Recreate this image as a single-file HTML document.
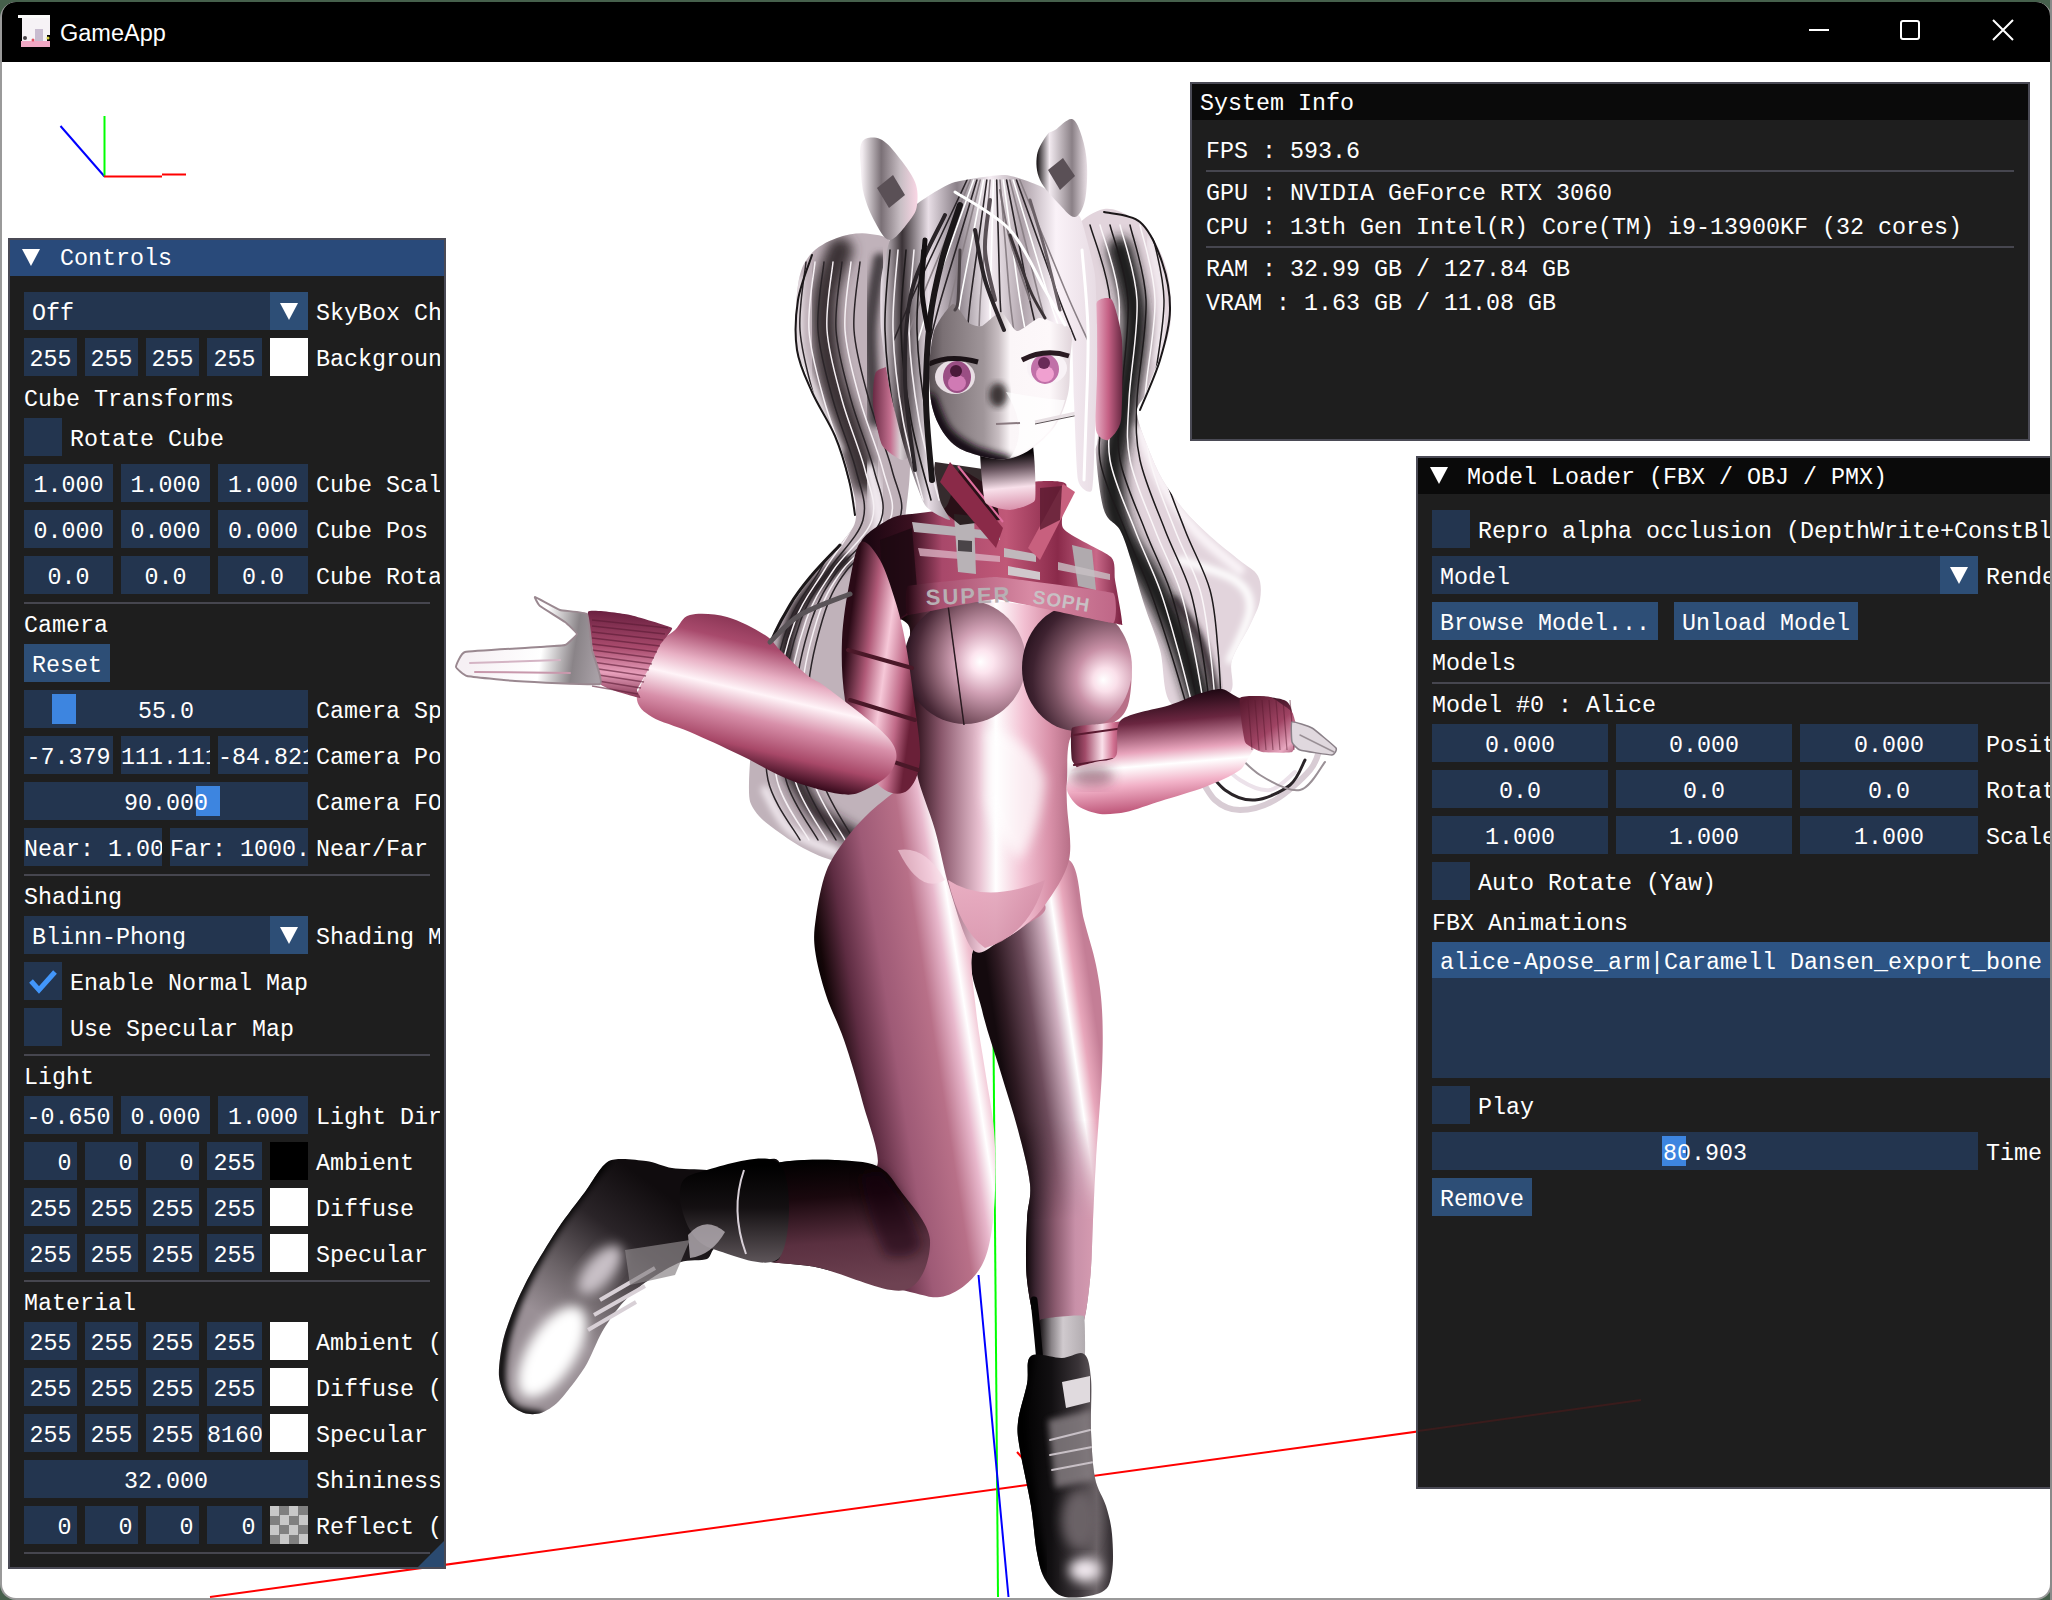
<!DOCTYPE html><html><head><meta charset="utf-8"><style>
html,body{margin:0;padding:0;width:2052px;height:1600px;overflow:hidden;background:#46604c;}
#root{position:absolute;left:0;top:0;width:2052px;height:1600px;overflow:hidden;}
#root div,#root span,#root svg{position:absolute;}
.t{font-family:"Liberation Mono",monospace;font-size:23.33px;line-height:26px;margin-top:3px;white-space:pre;color:#fff;}
.clip{overflow:hidden;}
</style></head><body><div id="root">

<div style="left:0;top:2px;width:2052px;height:1598px;background:#9a9a9a;border-radius:16px 16px 16px 16px;"></div>
<div style="left:2px;top:2px;width:2048px;height:1596px;background:#ffffff;border-radius:14px;overflow:hidden;" id="win">
<div style="left:0;top:0;width:2048px;height:60px;background:#000;"></div>
</div>
<svg style="left:18px;top:15px" width="32" height="32"><rect x="0" y="0" width="32" height="32" fill="#f6f2f6"/><rect x="0" y="0" width="4" height="32" fill="#000"/><rect x="0" y="0" width="32" height="3" fill="#fafafa"/><rect x="3" y="26" width="29" height="6" fill="#f0a8c4"/><circle cx="7" cy="23" r="2" fill="#4a4448"/><circle cx="22" cy="24" r="2" fill="#4a4448"/><circle cx="15" cy="25" r="1.5" fill="#e05060"/><rect x="17" y="14" width="8" height="12" fill="#c8bcd0"/><rect x="0" y="18" width="3" height="14" fill="#000"/><rect x="29" y="20" width="3" height="6" fill="#000"/><circle cx="30" cy="23" r="1.5" fill="#d8d040"/></svg>
<span style="left:60px;top:16px;font-family:'Liberation Sans',sans-serif;font-size:23.5px;line-height:34px;color:#fff;white-space:pre;">GameApp</span>
<div style="left:1809px;top:29px;width:20px;height:2px;background:#fff;"></div>
<div style="left:1900px;top:20px;width:16px;height:16px;border:2px solid #fff;border-radius:3px;"></div>
<svg style="left:1992px;top:19px" width="22" height="22"><path d="M1 1 L21 21 M21 1 L1 21" stroke="#fff" stroke-width="2"/></svg>
<svg style="left:0;top:0" width="2052" height="1600"><path d="M60.5 126 L104.5 176.5" stroke="#0000ff" stroke-width="2" fill="none"/><path d="M104.5 116 L104.5 176.5" stroke="#00ff00" stroke-width="2" fill="none"/><path d="M104 176.5 L162 176.5 M162 174.5 L186 174.5" stroke="#ff0000" stroke-width="2" fill="none"/></svg>
<svg style="left:0;top:0" width="2052" height="1600" viewBox="0 0 2052 1600"><defs><filter id="blur3" x="-20%" y="-20%" width="140%" height="140%"><feGaussianBlur stdDeviation="3"/></filter><filter id="blur6" x="-30%" y="-30%" width="160%" height="160%"><feGaussianBlur stdDeviation="6"/></filter><clipPath id="clipHairL"><path d="M837.0 238.0 C827.0 241.5 816.5 247.2 810.0 255.0 C803.5 262.8 800.3 270.2 798.0 285.0 C795.7 299.8 794.8 329.8 796.0 344.0 C797.2 358.2 802.0 361.8 805.0 370.0 C808.0 378.2 809.0 382.2 814.0 393.0 C819.0 403.8 829.5 421.2 835.0 435.0 C840.5 448.8 843.5 462.3 847.0 476.0 C850.5 489.7 856.8 506.0 856.0 517.0 C855.2 528.0 849.0 532.5 842.0 542.0 C835.0 551.5 821.8 564.3 814.0 574.0 C806.2 583.7 801.5 590.7 795.0 600.0 C788.5 609.3 781.3 613.3 775.0 630.0 C768.7 646.7 761.3 674.5 757.0 700.0 C752.7 725.5 749.3 764.5 749.0 783.0 C748.7 801.5 749.8 802.7 755.0 811.0 C760.2 819.3 770.7 826.2 780.0 833.0 C789.3 839.8 800.7 847.2 811.0 852.0 C821.3 856.8 830.5 860.7 842.0 862.0 C853.5 863.3 869.5 867.0 880.0 860.0 C890.5 853.0 903.3 846.7 905.0 820.0 C906.7 793.3 891.7 736.7 890.0 700.0 C888.3 663.3 892.5 630.0 895.0 600.0 C897.5 570.0 902.5 545.0 905.0 520.0 C907.5 495.0 910.8 481.7 910.0 450.0 C909.2 418.3 902.5 363.3 900.0 330.0 C897.5 296.7 900.0 266.0 895.0 250.0 C890.0 234.0 879.7 236.0 870.0 234.0 C860.3 232.0 847.0 234.5 837.0 238.0 Z"/></clipPath><clipPath id="clipHairR"><path d="M1079.0 224.0 C1082.2 218.8 1095.7 210.3 1104.0 209.0 C1112.3 207.7 1121.2 211.7 1129.0 216.0 C1136.8 220.3 1144.7 225.8 1151.0 235.0 C1157.3 244.2 1163.7 258.2 1167.0 271.0 C1170.3 283.8 1171.0 300.5 1171.0 312.0 C1171.0 323.5 1169.5 330.8 1167.0 340.0 C1164.5 349.2 1159.7 357.8 1156.0 367.0 C1152.3 376.2 1148.2 387.2 1145.0 395.0 C1141.8 402.8 1136.0 404.0 1137.0 414.0 C1138.0 424.0 1146.5 443.7 1151.0 455.0 C1155.5 466.3 1158.5 472.8 1164.0 482.0 C1169.5 491.2 1176.2 500.8 1184.0 510.0 C1191.8 519.2 1201.8 528.7 1211.0 537.0 C1220.2 545.3 1231.2 553.5 1239.0 560.0 C1246.8 566.5 1254.5 569.3 1258.0 576.0 C1261.5 582.7 1261.3 591.8 1260.0 600.0 C1258.7 608.2 1254.7 615.0 1250.0 625.0 C1245.3 635.0 1235.7 648.3 1232.0 660.0 C1228.3 671.7 1237.8 687.5 1228.0 695.0 C1218.2 702.5 1184.3 712.5 1173.0 705.0 C1161.7 697.5 1164.8 666.8 1160.0 650.0 C1155.2 633.2 1148.8 619.0 1144.0 604.0 C1139.2 589.0 1135.0 572.3 1131.0 560.0 C1127.0 547.7 1124.5 538.3 1120.0 530.0 C1115.5 521.7 1108.0 522.5 1104.0 510.0 C1100.0 497.5 1097.0 468.8 1096.0 455.0 C1095.0 441.2 1098.2 452.8 1098.0 427.0 C1097.8 401.2 1097.2 331.2 1095.0 300.0 C1092.8 268.8 1087.7 252.7 1085.0 240.0 C1082.3 227.3 1075.8 229.2 1079.0 224.0 Z"/></clipPath><linearGradient id="legR" gradientUnits="userSpaceOnUse" x1="1005" y1="1090" x2="1104" y2="1075"><stop offset="0" stop-color="#140a0e"/><stop offset="0.12" stop-color="#2e1a22"/><stop offset="0.38" stop-color="#6e4c5c"/><stop offset="0.62" stop-color="#d0b0c0"/><stop offset="0.74" stop-color="#ffffff"/><stop offset="0.86" stop-color="#e8a8bc"/><stop offset="1" stop-color="#c47e96"/></linearGradient><clipPath id="clipLegR"><path d="M973.0 950.0 C966.7 971.7 977.5 990.0 982.0 1010.0 C986.5 1030.0 994.0 1050.0 1000.0 1070.0 C1006.0 1090.0 1013.0 1111.0 1018.0 1130.0 C1023.0 1149.0 1028.5 1169.0 1030.0 1184.0 C1031.5 1199.0 1027.5 1204.0 1027.0 1220.0 C1026.5 1236.0 1025.0 1262.0 1027.0 1280.0 C1029.0 1298.0 1033.2 1321.0 1039.0 1328.0 C1044.8 1335.0 1055.0 1322.0 1062.0 1322.0 C1069.0 1322.0 1076.3 1335.0 1081.0 1328.0 C1085.7 1321.0 1088.0 1298.0 1090.0 1280.0 C1092.0 1262.0 1092.0 1240.0 1093.0 1220.0 C1094.0 1200.0 1094.5 1185.0 1096.0 1160.0 C1097.5 1135.0 1101.0 1095.0 1102.0 1070.0 C1103.0 1045.0 1103.0 1027.5 1102.0 1010.0 C1101.0 992.5 1099.0 980.0 1096.0 965.0 C1093.0 950.0 1088.5 937.5 1084.0 920.0 C1079.5 902.5 1079.7 866.7 1069.0 860.0 C1058.3 853.3 1036.0 865.0 1020.0 880.0 C1004.0 895.0 979.3 928.3 973.0 950.0 Z"/></clipPath><linearGradient id="legR2" gradientUnits="userSpaceOnUse" x1="1025" y1="1250" x2="1092" y2="1250"><stop offset="0" stop-color="#0a0406"/><stop offset="0.15" stop-color="#3a2430"/><stop offset="0.45" stop-color="#8a5a6e"/><stop offset="0.75" stop-color="#c890a8"/><stop offset="1" stop-color="#d49ab0"/></linearGradient><linearGradient id="fadeV" gradientUnits="userSpaceOnUse" x1="0" y1="1120" x2="0" y2="1220"><stop offset="0" stop-color="#fff" stop-opacity="0"/><stop offset="1" stop-color="#fff" stop-opacity="1"/></linearGradient><mask id="mLegR2" maskUnits="userSpaceOnUse" x="0" y="0" width="2052" height="1600"><rect x="0" y="0" width="2052" height="1600" fill="url(#fadeV)"/></mask><linearGradient id="sock" gradientUnits="userSpaceOnUse" x1="1040" y1="1350" x2="1086" y2="1350"><stop offset="0" stop-color="#1a1618"/><stop offset="0.25" stop-color="#8a8488"/><stop offset="0.5" stop-color="#d0cace"/><stop offset="1" stop-color="#b0aaae"/></linearGradient><linearGradient id="bootR" gradientUnits="userSpaceOnUse" x1="1020" y1="1450" x2="1110" y2="1450"><stop offset="0" stop-color="#000000"/><stop offset="0.35" stop-color="#121012"/><stop offset="0.65" stop-color="#3a3438"/><stop offset="0.85" stop-color="#6a6266"/><stop offset="1" stop-color="#3a3438"/></linearGradient><clipPath id="clipBootR"><path d="M1031.0 1356.0 C1036.8 1351.7 1053.2 1358.3 1062.0 1358.0 C1070.8 1357.7 1079.2 1350.5 1084.0 1354.0 C1088.8 1357.5 1089.8 1366.2 1091.0 1379.0 C1092.2 1391.8 1090.3 1414.5 1091.0 1431.0 C1091.7 1447.5 1092.5 1465.5 1095.0 1478.0 C1097.5 1490.5 1103.2 1496.7 1106.0 1506.0 C1108.8 1515.3 1111.0 1523.0 1112.0 1534.0 C1113.0 1545.0 1113.7 1562.3 1112.0 1572.0 C1110.3 1581.7 1109.8 1587.8 1102.0 1592.0 C1094.2 1596.2 1074.3 1598.8 1065.0 1597.0 C1055.7 1595.2 1050.7 1588.3 1046.0 1581.0 C1041.3 1573.7 1039.5 1565.5 1037.0 1553.0 C1034.5 1540.5 1033.8 1523.2 1031.0 1506.0 C1028.2 1488.8 1022.2 1464.0 1020.0 1450.0 C1017.8 1436.0 1016.8 1433.0 1018.0 1422.0 C1019.2 1411.0 1024.8 1395.0 1027.0 1384.0 C1029.2 1373.0 1025.2 1360.3 1031.0 1356.0 Z"/></clipPath><linearGradient id="legL" gradientUnits="userSpaceOnUse" x1="816" y1="1000" x2="998" y2="971"><stop offset="0" stop-color="#000000"/><stop offset="0.07" stop-color="#140608"/><stop offset="0.2" stop-color="#5e2c42"/><stop offset="0.38" stop-color="#9e5a76"/><stop offset="0.6" stop-color="#b87088"/><stop offset="0.72" stop-color="#e8b8cc"/><stop offset="0.79" stop-color="#ffffff"/><stop offset="0.86" stop-color="#f0c0d0"/><stop offset="1" stop-color="#c8849c"/></linearGradient><linearGradient id="shin" gradientUnits="userSpaceOnUse" x1="800" y1="1160" x2="810" y2="1290"><stop offset="0" stop-color="#000000"/><stop offset="0.3" stop-color="#1a080e"/><stop offset="0.65" stop-color="#5a3040"/><stop offset="1" stop-color="#6e4252"/></linearGradient><radialGradient id="kneeSh" gradientUnits="userSpaceOnUse" cx="905" cy="1200" r="45"><stop offset="0" stop-color="#000000"/><stop offset="0.5" stop-color="#1a0810"/><stop offset="1" stop-color="#3a1a26"/></radialGradient><linearGradient id="bootL" gradientUnits="userSpaceOnUse" x1="660" y1="1190" x2="560" y2="1330"><stop offset="0" stop-color="#100c0e"/><stop offset="0.35" stop-color="#2a2428"/><stop offset="0.7" stop-color="#6a6266"/><stop offset="1" stop-color="#9a9096"/></linearGradient><clipPath id="clipBootL"><path d="M609.0 1161.0 C617.1 1156.9 637.6 1160.1 646.0 1161.0 C654.4 1161.9 663.9 1166.8 672.0 1168.0 C680.1 1169.2 698.7 1169.3 707.0 1170.0 C715.3 1170.7 727.9 1173.5 734.0 1173.0 C740.1 1172.5 746.9 1167.2 753.0 1166.0 C759.1 1164.8 776.4 1151.9 780.0 1164.0 C783.6 1176.1 784.5 1245.0 780.0 1257.0 C775.5 1269.0 754.5 1255.2 746.0 1254.0 C737.5 1252.8 721.2 1247.3 716.0 1248.0 C710.8 1248.7 711.7 1257.1 707.0 1259.0 C702.3 1260.9 687.9 1259.7 681.0 1262.0 C674.1 1264.3 660.9 1272.4 655.0 1276.0 C649.1 1279.6 641.7 1285.0 637.0 1289.0 C632.3 1293.0 624.7 1300.3 620.0 1306.0 C615.3 1311.7 606.7 1323.9 602.0 1332.0 C597.3 1340.1 590.7 1357.8 585.0 1367.0 C579.3 1376.2 564.9 1394.9 559.0 1401.0 C553.1 1407.1 545.7 1411.4 541.0 1413.0 C536.3 1414.6 528.4 1414.5 524.0 1413.0 C519.6 1411.5 511.3 1406.9 508.0 1402.0 C504.7 1397.1 499.7 1384.1 499.0 1376.0 C498.3 1367.9 500.9 1350.3 503.0 1341.0 C505.1 1331.7 511.1 1315.3 515.0 1306.0 C518.9 1296.7 526.1 1281.5 532.0 1271.0 C537.9 1260.5 551.9 1237.5 559.0 1227.0 C566.1 1216.5 578.3 1200.8 585.0 1192.0 C591.7 1183.2 600.9 1165.1 609.0 1161.0 Z"/></clipPath><linearGradient id="ankle" gradientUnits="userSpaceOnUse" x1="720" y1="1165" x2="720" y2="1260"><stop offset="0" stop-color="#000000"/><stop offset="0.45" stop-color="#141012"/><stop offset="1" stop-color="#5a5256"/></linearGradient><linearGradient id="torso" gradientUnits="userSpaceOnUse" x1="905" y1="780" x2="1070" y2="780"><stop offset="0" stop-color="#120608"/><stop offset="0.08" stop-color="#3a1a26"/><stop offset="0.22" stop-color="#8a586c"/><stop offset="0.45" stop-color="#e8c0d0"/><stop offset="0.55" stop-color="#ffffff"/><stop offset="0.72" stop-color="#f2c0d2"/><stop offset="0.88" stop-color="#d890a8"/><stop offset="1" stop-color="#b87088"/></linearGradient><radialGradient id="brL" gradientUnits="userSpaceOnUse" cx="1000" cy="660" r="95" fx="980" fy="662"><stop offset="0" stop-color="#ffffff"/><stop offset="0.12" stop-color="#fce4ee"/><stop offset="0.35" stop-color="#d0a0b4"/><stop offset="0.62" stop-color="#8a6070"/><stop offset="0.85" stop-color="#4a2a38"/><stop offset="1" stop-color="#2a1420"/></radialGradient><radialGradient id="brR" gradientUnits="userSpaceOnUse" cx="1120" cy="678" r="100" fx="1103" fy="680"><stop offset="0" stop-color="#ffffff"/><stop offset="0.12" stop-color="#fae0ea"/><stop offset="0.32" stop-color="#c890a6"/><stop offset="0.6" stop-color="#7a5262"/><stop offset="0.85" stop-color="#3e2230"/><stop offset="1" stop-color="#2a1420"/></radialGradient><linearGradient id="crotch" gradientUnits="userSpaceOnUse" x1="960" y1="870" x2="1050" y2="950"><stop offset="0" stop-color="#f0b4c8"/><stop offset="1" stop-color="#c8809a"/></linearGradient><linearGradient id="uarmR" gradientUnits="userSpaceOnUse" x1="1068" y1="745" x2="1125" y2="745"><stop offset="0" stop-color="#3a1020"/><stop offset="0.3" stop-color="#a04a68"/><stop offset="0.6" stop-color="#fae0ea"/><stop offset="0.8" stop-color="#d07090"/><stop offset="1" stop-color="#8a3454"/></linearGradient><linearGradient id="farmR" gradientUnits="userSpaceOnUse" x1="1190" y1="690" x2="1200" y2="805"><stop offset="0" stop-color="#1a0610"/><stop offset="0.25" stop-color="#6a2640"/><stop offset="0.5" stop-color="#e8a4bc"/><stop offset="0.62" stop-color="#ffffff"/><stop offset="0.78" stop-color="#f2b2c8"/><stop offset="1" stop-color="#c05a7c"/></linearGradient><linearGradient id="cuffR" gradientUnits="userSpaceOnUse" x1="1245" y1="700" x2="1295" y2="760"><stop offset="0" stop-color="#5a1a30"/><stop offset="0.5" stop-color="#a04464"/><stop offset="0.8" stop-color="#e8a8c0"/><stop offset="1" stop-color="#8a3454"/></linearGradient><linearGradient id="jacket" gradientUnits="userSpaceOnUse" x1="865" y1="580" x2="1122" y2="580"><stop offset="0" stop-color="#1a0610"/><stop offset="0.18" stop-color="#3a1020"/><stop offset="0.3" stop-color="#a8486a"/><stop offset="0.55" stop-color="#c05878"/><stop offset="0.75" stop-color="#8a2a4a"/><stop offset="0.9" stop-color="#c86888"/><stop offset="1" stop-color="#7a2040"/></linearGradient><linearGradient id="band" gradientUnits="userSpaceOnUse" x1="908" y1="600" x2="1113" y2="600"><stop offset="0" stop-color="#2a0a16"/><stop offset="0.15" stop-color="#a85070"/><stop offset="0.6" stop-color="#d88aa4"/><stop offset="1" stop-color="#c06888"/></linearGradient><linearGradient id="uarmL" gradientUnits="userSpaceOnUse" x1="842" y1="680" x2="915" y2="690"><stop offset="0" stop-color="#2a0a16"/><stop offset="0.3" stop-color="#b05a78"/><stop offset="0.55" stop-color="#f6c8d8"/><stop offset="0.8" stop-color="#c06a88"/><stop offset="1" stop-color="#6a2038"/></linearGradient><linearGradient id="sleeveL" gradientUnits="userSpaceOnUse" x1="760" y1="610" x2="715" y2="800"><stop offset="0" stop-color="#7a2a48"/><stop offset="0.18" stop-color="#a84a6c"/><stop offset="0.32" stop-color="#e8b0c4"/><stop offset="0.42" stop-color="#fff4f8"/><stop offset="0.55" stop-color="#d890aa"/><stop offset="0.7" stop-color="#a84868"/><stop offset="0.82" stop-color="#3a0c1e"/><stop offset="1" stop-color="#1a0610"/></linearGradient><linearGradient id="cuffL" gradientUnits="userSpaceOnUse" x1="630" y1="612" x2="625" y2="700"><stop offset="0" stop-color="#6a2040"/><stop offset="0.4" stop-color="#a84a6c"/><stop offset="0.7" stop-color="#e8a0bc"/><stop offset="1" stop-color="#7a2a48"/></linearGradient><linearGradient id="handL" gradientUnits="userSpaceOnUse" x1="470" y1="640" x2="600" y2="660"><stop offset="0" stop-color="#f6f0f4"/><stop offset="0.55" stop-color="#ffffff"/><stop offset="0.8" stop-color="#8a8488"/><stop offset="1" stop-color="#a8a0a6"/></linearGradient><linearGradient id="neck" gradientUnits="userSpaceOnUse" x1="1005" y1="455" x2="1010" y2="510"><stop offset="0" stop-color="#0a0608"/><stop offset="0.25" stop-color="#6a5660"/><stop offset="0.6" stop-color="#f8e0ea"/><stop offset="1" stop-color="#d890aa"/></linearGradient><linearGradient id="face" gradientUnits="userSpaceOnUse" x1="925" y1="400" x2="1072" y2="400"><stop offset="0" stop-color="#4a4246"/><stop offset="0.12" stop-color="#7a7074"/><stop offset="0.4" stop-color="#a0969a"/><stop offset="0.5" stop-color="#c8bec2"/><stop offset="0.58" stop-color="#fbf6f8"/><stop offset="0.85" stop-color="#fdf8fa"/><stop offset="1" stop-color="#e0d4da"/></linearGradient><clipPath id="clipFace"><path d="M925.0 300.0 C949.5 289.0 1050.5 288.3 1075.0 295.0 C1099.5 301.7 1072.8 329.0 1072.0 340.0 C1071.2 351.0 1070.7 352.0 1070.0 361.0 C1069.3 370.0 1070.5 383.2 1068.0 394.0 C1065.5 404.8 1061.2 416.8 1055.0 426.0 C1048.8 435.2 1039.2 443.5 1031.0 449.0 C1022.8 454.5 1015.0 458.0 1006.0 459.0 C997.0 460.0 986.2 457.8 977.0 455.0 C967.8 452.2 958.3 449.5 951.0 442.0 C943.7 434.5 936.8 423.5 933.0 410.0 C929.2 396.5 929.3 379.3 928.0 361.0 C926.7 342.7 900.5 311.0 925.0 300.0 Z"/></clipPath><linearGradient id="hpL" gradientUnits="userSpaceOnUse" x1="873" y1="410" x2="912" y2="410"><stop offset="0" stop-color="#6a2a44"/><stop offset="0.45" stop-color="#c47090"/><stop offset="0.7" stop-color="#d8d0d4"/><stop offset="1" stop-color="#8a8086"/></linearGradient><linearGradient id="hpR" gradientUnits="userSpaceOnUse" x1="1095" y1="370" x2="1122" y2="370"><stop offset="0" stop-color="#e8b0c6"/><stop offset="0.5" stop-color="#c46084"/><stop offset="1" stop-color="#6a2a44"/></linearGradient><linearGradient id="bangs" gradientUnits="userSpaceOnUse" x1="880" y1="300" x2="1100" y2="300"><stop offset="0" stop-color="#f0e6ee"/><stop offset="0.1" stop-color="#3a3236"/><stop offset="0.22" stop-color="#e8dee6"/><stop offset="0.35" stop-color="#8a8088"/><stop offset="0.5" stop-color="#f6eef4"/><stop offset="0.65" stop-color="#b0a4ac"/><stop offset="0.8" stop-color="#faf2f8"/><stop offset="1" stop-color="#e6dae2"/></linearGradient><clipPath id="clipBangs"><path d="M910.0 210.0 C914.0 205.5 925.5 197.8 930.0 195.0 C934.5 192.2 947.5 184.0 955.0 182.0 C962.5 180.0 996.3 174.5 1005.0 175.0 C1013.7 175.5 1035.8 184.0 1042.0 187.0 C1048.2 190.0 1063.2 202.0 1067.0 205.0 C1070.8 208.0 1078.0 213.5 1080.0 217.0 C1082.0 220.5 1085.5 234.2 1087.0 240.0 C1088.5 245.8 1094.0 266.5 1095.0 275.0 C1096.0 283.5 1096.8 315.0 1097.0 325.0 C1097.2 335.0 1097.2 364.5 1097.0 375.0 C1096.8 385.5 1095.5 418.5 1095.0 430.0 C1094.5 441.5 1093.7 485.0 1092.0 490.0 C1090.3 495.0 1079.8 489.0 1078.0 480.0 C1076.2 471.0 1074.7 414.9 1074.0 400.0 C1073.3 385.1 1072.9 338.7 1071.0 331.0 C1069.1 323.3 1058.2 324.3 1055.0 323.0 C1051.8 321.7 1042.8 317.2 1039.0 318.0 C1035.2 318.8 1020.8 331.6 1017.0 331.0 C1013.2 330.4 1004.5 312.5 1001.0 312.0 C997.5 311.5 985.2 324.9 982.0 326.0 C978.8 327.1 971.9 325.2 969.0 323.0 C966.1 320.8 956.5 303.2 953.0 304.0 C949.5 304.8 936.5 323.4 934.0 331.0 C931.5 338.6 928.4 369.1 928.0 380.0 C927.6 390.9 928.8 428.0 930.0 440.0 C931.2 452.0 938.0 492.0 940.0 500.0 C942.0 508.0 951.5 519.5 950.0 520.0 C948.5 520.5 929.5 512.0 925.0 505.0 C920.5 498.0 908.5 461.5 905.0 450.0 C901.5 438.5 892.4 402.0 890.0 390.0 C887.6 378.0 881.9 341.0 881.0 330.0 C880.1 319.0 880.1 289.0 881.0 280.0 C881.9 271.0 887.1 247.0 890.0 240.0 C892.9 233.0 906.0 214.5 910.0 210.0 Z"/></clipPath><linearGradient id="earL" gradientUnits="userSpaceOnUse" x1="862" y1="190" x2="917" y2="190"><stop offset="0" stop-color="#f4eef2"/><stop offset="0.35" stop-color="#7a7076"/><stop offset="0.7" stop-color="#c8bec4"/><stop offset="1" stop-color="#f8d6e4"/></linearGradient><linearGradient id="earR" gradientUnits="userSpaceOnUse" x1="1037" y1="170" x2="1087" y2="170"><stop offset="0" stop-color="#1a1618"/><stop offset="0.25" stop-color="#f2eaf0"/><stop offset="0.7" stop-color="#8a8086"/><stop offset="1" stop-color="#e8dee4"/></linearGradient></defs><path d="M210 1597 L1640 1401" stroke="#ff0000" stroke-width="2" fill="none"/>
<path d="M993.5 1040 L998 1597" stroke="#00ff00" stroke-width="2" fill="none"/>
<path d="M978.5 1275 L1008.5 1597" stroke="#0000ff" stroke-width="2" fill="none"/>
<path d="M1017 1452 L1027 1463" stroke="#ff0000" stroke-width="2" fill="none"/>
<path d="M837.0 238.0 C827.0 241.5 816.5 247.2 810.0 255.0 C803.5 262.8 800.3 270.2 798.0 285.0 C795.7 299.8 794.8 329.8 796.0 344.0 C797.2 358.2 802.0 361.8 805.0 370.0 C808.0 378.2 809.0 382.2 814.0 393.0 C819.0 403.8 829.5 421.2 835.0 435.0 C840.5 448.8 843.5 462.3 847.0 476.0 C850.5 489.7 856.8 506.0 856.0 517.0 C855.2 528.0 849.0 532.5 842.0 542.0 C835.0 551.5 821.8 564.3 814.0 574.0 C806.2 583.7 801.5 590.7 795.0 600.0 C788.5 609.3 781.3 613.3 775.0 630.0 C768.7 646.7 761.3 674.5 757.0 700.0 C752.7 725.5 749.3 764.5 749.0 783.0 C748.7 801.5 749.8 802.7 755.0 811.0 C760.2 819.3 770.7 826.2 780.0 833.0 C789.3 839.8 800.7 847.2 811.0 852.0 C821.3 856.8 830.5 860.7 842.0 862.0 C853.5 863.3 869.5 867.0 880.0 860.0 C890.5 853.0 903.3 846.7 905.0 820.0 C906.7 793.3 891.7 736.7 890.0 700.0 C888.3 663.3 892.5 630.0 895.0 600.0 C897.5 570.0 902.5 545.0 905.0 520.0 C907.5 495.0 910.8 481.7 910.0 450.0 C909.2 418.3 902.5 363.3 900.0 330.0 C897.5 296.7 900.0 266.0 895.0 250.0 C890.0 234.0 879.7 236.0 870.0 234.0 C860.3 232.0 847.0 234.5 837.0 238.0 Z" fill="#c0b2ba" />
<g clip-path="url(#clipHairL)">
<path d="M840.0 250.0 C837.5 258.3 826.7 280.0 825.0 300.0 C823.3 320.0 825.8 348.3 830.0 370.0 C834.2 391.7 844.2 411.7 850.0 430.0 C855.8 448.3 862.5 471.7 865.0 480.0" fill="none" stroke="#3a3236" stroke-width="26" stroke-linecap="round" filter="url(#blur6)"/>
<path d="M880.0 260.0 C878.3 271.7 870.8 303.3 870.0 330.0 C869.2 356.7 874.2 405.0 875.0 420.0" fill="none" stroke="#4a4246" stroke-width="14" stroke-linecap="round" filter="url(#blur3)"/>
<path d="M800.0 280.0 C800.0 291.7 797.0 330.0 800.0 350.0 C803.0 370.0 811.3 383.3 818.0 400.0 C824.7 416.7 836.3 441.7 840.0 450.0" fill="none" stroke="#f4eef2" stroke-width="6" stroke-linecap="round" filter="url(#blur3)"/>
<path d="M870.0 470.0 C871.7 478.3 879.2 505.0 880.0 520.0 C880.8 535.0 875.8 553.3 875.0 560.0" fill="none" stroke="#f0e8ee" stroke-width="14" stroke-linecap="round" filter="url(#blur3)"/>
<path d="M845.0 560.0 C839.5 565.0 821.2 578.3 812.0 590.0 C802.8 601.7 795.3 611.7 790.0 630.0 C784.7 648.3 781.7 688.3 780.0 700.0" fill="none" stroke="#2a2428" stroke-width="14" stroke-linecap="round" filter="url(#blur3)"/>
<path d="M765.0 790.0 C769.2 796.7 778.3 819.7 790.0 830.0 C801.7 840.3 827.5 848.3 835.0 852.0" fill="none" stroke="#f0e8ee" stroke-width="8" stroke-linecap="round" filter="url(#blur3)"/>
<path d="M790.0 770.0 C795.0 777.5 806.7 802.5 820.0 815.0 C833.3 827.5 861.7 840.0 870.0 845.0" fill="none" stroke="#2a2428" stroke-width="16" stroke-linecap="round" filter="url(#blur6)"/>
<path d="M806.0 262.0 C805.0 273.3 798.5 307.0 800.0 330.0 C801.5 353.0 808.7 376.7 815.0 400.0 C821.3 423.3 833.0 450.0 838.0 470.0 C843.0 490.0 848.0 503.3 845.0 520.0 C842.0 536.7 829.2 553.3 820.0 570.0 C810.8 586.7 798.3 598.3 790.0 620.0 C781.7 641.7 773.7 673.3 770.0 700.0 C766.3 726.7 763.0 756.7 768.0 780.0 C773.0 803.3 794.7 830.0 800.0 840.0" fill="none" stroke="#2a2428" stroke-width="1.5" stroke-linecap="round" />
<path d="M815.0 262.0 C814.0 273.3 807.5 307.0 809.0 330.0 C810.5 353.0 817.7 376.7 824.0 400.0 C830.3 423.3 842.0 450.0 847.0 470.0 C852.0 490.0 857.8 503.3 854.0 520.0 C850.2 536.7 834.3 553.3 824.5 570.0 C814.7 586.7 803.4 598.3 795.4 620.0 C787.4 641.7 779.4 673.3 776.3 700.0 C773.2 726.7 771.5 756.7 777.0 780.0 C782.5 803.3 803.7 830.0 809.0 840.0" fill="none" stroke="#f6f0f4" stroke-width="1.5" stroke-linecap="round" />
<path d="M824.0 262.0 C823.0 273.3 816.5 307.0 818.0 330.0 C819.5 353.0 826.7 376.7 833.0 400.0 C839.3 423.3 851.0 450.0 856.0 470.0 C861.0 490.0 867.5 503.3 863.0 520.0 C858.5 536.7 839.4 553.3 829.0 570.0 C818.6 586.7 808.5 598.3 800.8 620.0 C793.1 641.7 785.1 673.3 782.6 700.0 C780.1 726.7 780.1 756.7 786.0 780.0 C791.9 803.3 812.7 830.0 818.0 840.0" fill="none" stroke="#2a2428" stroke-width="1.5" stroke-linecap="round" />
<path d="M833.0 262.0 C832.0 273.3 825.5 307.0 827.0 330.0 C828.5 353.0 835.7 376.7 842.0 400.0 C848.3 423.3 860.0 450.0 865.0 470.0 C870.0 490.0 877.2 503.3 872.0 520.0 C866.8 536.7 844.5 553.3 833.5 570.0 C822.5 586.7 813.6 598.3 806.2 620.0 C798.8 641.7 790.8 673.3 788.9 700.0 C787.0 726.7 788.6 756.7 795.0 780.0 C801.4 803.3 821.7 830.0 827.0 840.0" fill="none" stroke="#f6f0f4" stroke-width="1.5" stroke-linecap="round" />
<path d="M842.0 262.0 C841.0 273.3 834.5 307.0 836.0 330.0 C837.5 353.0 844.7 376.7 851.0 400.0 C857.3 423.3 869.0 450.0 874.0 470.0 C879.0 490.0 887.0 503.3 881.0 520.0 C875.0 536.7 849.6 553.3 838.0 570.0 C826.4 586.7 818.7 598.3 811.6 620.0 C804.5 641.7 796.5 673.3 795.2 700.0 C793.9 726.7 797.2 756.7 804.0 780.0 C810.8 803.3 830.7 830.0 836.0 840.0" fill="none" stroke="#2a2428" stroke-width="1.5" stroke-linecap="round" />
<path d="M851.0 262.0 C850.0 273.3 843.5 307.0 845.0 330.0 C846.5 353.0 853.7 376.7 860.0 400.0 C866.3 423.3 878.0 450.0 883.0 470.0 C888.0 490.0 896.8 503.3 890.0 520.0 C883.2 536.7 854.7 553.3 842.5 570.0 C830.3 586.7 823.8 598.3 817.0 620.0 C810.2 641.7 802.2 673.3 801.5 700.0 C800.8 726.7 805.8 756.7 813.0 780.0 C820.2 803.3 839.7 830.0 845.0 840.0" fill="none" stroke="#f6f0f4" stroke-width="1.5" stroke-linecap="round" />
<path d="M860.0 262.0 C859.0 273.3 852.5 307.0 854.0 330.0 C855.5 353.0 862.7 376.7 869.0 400.0 C875.3 423.3 887.0 450.0 892.0 470.0 C897.0 490.0 906.5 503.3 899.0 520.0 C891.5 536.7 859.8 553.3 847.0 570.0 C834.2 586.7 828.9 598.3 822.4 620.0 C815.9 641.7 807.9 673.3 807.8 700.0 C807.7 726.7 814.3 756.7 822.0 780.0 C829.7 803.3 848.7 830.0 854.0 840.0" fill="none" stroke="#2a2428" stroke-width="1.5" stroke-linecap="round" />
</g>
<path d="M812.0 255.0 C809.7 262.5 800.5 284.2 798.0 300.0 C795.5 315.8 794.7 334.7 797.0 350.0 C799.3 365.3 805.7 377.7 812.0 392.0 C818.3 406.3 828.8 421.3 835.0 436.0 C841.2 450.7 845.7 466.8 849.0 480.0 C852.3 493.2 854.0 509.2 855.0 515.0" fill="none" stroke="#1a1618" stroke-width="2" stroke-linecap="round" />
<path d="M840.0 545.0 C835.3 550.0 820.3 565.0 812.0 575.0 C803.7 585.0 797.3 592.5 790.0 605.0 C782.7 617.5 773.5 632.5 768.0 650.0 C762.5 667.5 758.8 700.0 757.0 710.0" fill="none" stroke="#1a1618" stroke-width="3" stroke-linecap="round" />
<path d="M1079.0 224.0 C1082.2 218.8 1095.7 210.3 1104.0 209.0 C1112.3 207.7 1121.2 211.7 1129.0 216.0 C1136.8 220.3 1144.7 225.8 1151.0 235.0 C1157.3 244.2 1163.7 258.2 1167.0 271.0 C1170.3 283.8 1171.0 300.5 1171.0 312.0 C1171.0 323.5 1169.5 330.8 1167.0 340.0 C1164.5 349.2 1159.7 357.8 1156.0 367.0 C1152.3 376.2 1148.2 387.2 1145.0 395.0 C1141.8 402.8 1136.0 404.0 1137.0 414.0 C1138.0 424.0 1146.5 443.7 1151.0 455.0 C1155.5 466.3 1158.5 472.8 1164.0 482.0 C1169.5 491.2 1176.2 500.8 1184.0 510.0 C1191.8 519.2 1201.8 528.7 1211.0 537.0 C1220.2 545.3 1231.2 553.5 1239.0 560.0 C1246.8 566.5 1254.5 569.3 1258.0 576.0 C1261.5 582.7 1261.3 591.8 1260.0 600.0 C1258.7 608.2 1254.7 615.0 1250.0 625.0 C1245.3 635.0 1235.7 648.3 1232.0 660.0 C1228.3 671.7 1237.8 687.5 1228.0 695.0 C1218.2 702.5 1184.3 712.5 1173.0 705.0 C1161.7 697.5 1164.8 666.8 1160.0 650.0 C1155.2 633.2 1148.8 619.0 1144.0 604.0 C1139.2 589.0 1135.0 572.3 1131.0 560.0 C1127.0 547.7 1124.5 538.3 1120.0 530.0 C1115.5 521.7 1108.0 522.5 1104.0 510.0 C1100.0 497.5 1097.0 468.8 1096.0 455.0 C1095.0 441.2 1098.2 452.8 1098.0 427.0 C1097.8 401.2 1097.2 331.2 1095.0 300.0 C1092.8 268.8 1087.7 252.7 1085.0 240.0 C1082.3 227.3 1075.8 229.2 1079.0 224.0 Z" fill="#e2d4dc" />
<g clip-path="url(#clipHairR)">
<path d="M1120.0 250.0 C1122.5 261.7 1134.2 295.0 1135.0 320.0 C1135.8 345.0 1128.8 375.0 1125.0 400.0 C1121.2 425.0 1112.8 448.3 1112.0 470.0 C1111.2 491.7 1113.7 511.7 1120.0 530.0 C1126.3 548.3 1140.0 561.7 1150.0 580.0 C1160.0 598.3 1171.7 620.0 1180.0 640.0 C1188.3 660.0 1196.7 690.0 1200.0 700.0" fill="none" stroke="#1e1a1c" stroke-width="26" stroke-linecap="round" filter="url(#blur6)"/>
<path d="M1150.0 240.0 C1152.0 250.0 1160.7 280.0 1162.0 300.0 C1163.3 320.0 1158.7 350.0 1158.0 360.0" fill="none" stroke="#f8f2f6" stroke-width="6" stroke-linecap="round" filter="url(#blur3)"/>
<path d="M1140.0 430.0 C1143.3 438.3 1150.8 463.3 1160.0 480.0 C1169.2 496.7 1181.7 515.0 1195.0 530.0 C1208.3 545.0 1232.5 563.3 1240.0 570.0" fill="none" stroke="#faf4f8" stroke-width="10" stroke-linecap="round" filter="url(#blur3)"/>
<path d="M1180.0 560.0 C1189.2 563.3 1223.3 571.7 1235.0 580.0 C1246.7 588.3 1250.8 596.7 1250.0 610.0 C1249.2 623.3 1233.3 651.7 1230.0 660.0" fill="none" stroke="#ffffff" stroke-width="8" stroke-linecap="round" filter="url(#blur3)"/>
<path d="M1175.0 600.0 C1179.2 606.7 1193.3 625.0 1200.0 640.0 C1206.7 655.0 1212.5 681.7 1215.0 690.0" fill="none" stroke="#2a2428" stroke-width="8" stroke-linecap="round" filter="url(#blur3)"/>
<path d="M1090.0 225.0 C1093.3 237.5 1107.5 270.8 1110.0 300.0 C1112.5 329.2 1106.7 373.3 1105.0 400.0 C1103.3 426.7 1096.7 438.3 1100.0 460.0 C1103.3 481.7 1116.7 508.3 1125.0 530.0 C1133.3 551.7 1142.5 570.0 1150.0 590.0 C1157.5 610.0 1164.2 631.7 1170.0 650.0 C1175.8 668.3 1182.5 691.7 1185.0 700.0" fill="none" stroke="#1e1a1c" stroke-width="1.5" stroke-linecap="round" />
<path d="M1100.0 225.0 C1103.2 237.5 1116.8 270.8 1119.0 300.0 C1121.2 329.2 1114.5 373.3 1113.0 400.0 C1111.5 426.7 1106.3 438.3 1110.0 460.0 C1113.7 481.7 1126.7 508.3 1135.0 530.0 C1143.3 551.7 1152.8 570.0 1160.0 590.0 C1167.2 610.0 1172.8 631.7 1178.0 650.0 C1183.2 668.3 1188.8 691.7 1191.0 700.0" fill="none" stroke="#faf6f8" stroke-width="1.5" stroke-linecap="round" />
<path d="M1110.0 225.0 C1113.0 237.5 1126.2 270.8 1128.0 300.0 C1129.8 329.2 1122.3 373.3 1121.0 400.0 C1119.7 426.7 1116.0 438.3 1120.0 460.0 C1124.0 481.7 1136.7 508.3 1145.0 530.0 C1153.3 551.7 1163.2 570.0 1170.0 590.0 C1176.8 610.0 1181.5 631.7 1186.0 650.0 C1190.5 668.3 1195.2 691.7 1197.0 700.0" fill="none" stroke="#1e1a1c" stroke-width="1.5" stroke-linecap="round" />
<path d="M1120.0 225.0 C1122.8 237.5 1135.5 270.8 1137.0 300.0 C1138.5 329.2 1130.2 373.3 1129.0 400.0 C1127.8 426.7 1125.7 438.3 1130.0 460.0 C1134.3 481.7 1146.7 508.3 1155.0 530.0 C1163.3 551.7 1173.5 570.0 1180.0 590.0 C1186.5 610.0 1190.2 631.7 1194.0 650.0 C1197.8 668.3 1201.5 691.7 1203.0 700.0" fill="none" stroke="#faf6f8" stroke-width="1.5" stroke-linecap="round" />
<path d="M1130.0 225.0 C1132.7 237.5 1144.8 270.8 1146.0 300.0 C1147.2 329.2 1138.0 373.3 1137.0 400.0 C1136.0 426.7 1135.3 438.3 1140.0 460.0 C1144.7 481.7 1156.7 508.3 1165.0 530.0 C1173.3 551.7 1183.8 570.0 1190.0 590.0 C1196.2 610.0 1198.8 631.7 1202.0 650.0 C1205.2 668.3 1207.8 691.7 1209.0 700.0" fill="none" stroke="#1e1a1c" stroke-width="1.5" stroke-linecap="round" />
<path d="M1140.0 225.0 C1142.5 237.5 1154.2 270.8 1155.0 300.0 C1155.8 329.2 1145.8 373.3 1145.0 400.0 C1144.2 426.7 1145.0 438.3 1150.0 460.0 C1155.0 481.7 1166.7 508.3 1175.0 530.0 C1183.3 551.7 1194.2 570.0 1200.0 590.0 C1205.8 610.0 1207.5 631.7 1210.0 650.0 C1212.5 668.3 1214.2 691.7 1215.0 700.0" fill="none" stroke="#faf6f8" stroke-width="1.5" stroke-linecap="round" />
<path d="M1150.0 225.0 C1152.3 237.5 1163.5 270.8 1164.0 300.0 C1164.5 329.2 1153.7 373.3 1153.0 400.0 C1152.3 426.7 1154.7 438.3 1160.0 460.0 C1165.3 481.7 1176.7 508.3 1185.0 530.0 C1193.3 551.7 1204.5 570.0 1210.0 590.0 C1215.5 610.0 1216.2 631.7 1218.0 650.0 C1219.8 668.3 1220.5 691.7 1221.0 700.0" fill="none" stroke="#1e1a1c" stroke-width="1.5" stroke-linecap="round" />
</g>
<path d="M1104.0 212.0 C1110.0 213.7 1130.3 213.7 1140.0 222.0 C1149.7 230.3 1157.0 247.3 1162.0 262.0 C1167.0 276.7 1170.3 293.7 1170.0 310.0 C1169.7 326.3 1165.0 343.3 1160.0 360.0 C1155.0 376.7 1143.3 401.7 1140.0 410.0" fill="none" stroke="#1a1618" stroke-width="2" stroke-linecap="round" />
<path d="M1196.0 770.0 C1199.2 775.0 1207.7 793.3 1215.0 800.0 C1222.3 806.7 1230.0 810.0 1240.0 810.0 C1250.0 810.0 1263.3 806.7 1275.0 800.0 C1286.7 793.3 1302.5 778.7 1310.0 770.0 C1317.5 761.3 1318.3 751.7 1320.0 748.0" fill="none" stroke="#d8ccd4" stroke-width="6" stroke-linecap="round" />
<path d="M1200.0 760.0 C1204.2 765.0 1215.8 783.3 1225.0 790.0 C1234.2 796.7 1244.2 800.8 1255.0 800.0 C1265.8 799.2 1281.7 791.7 1290.0 785.0 C1298.3 778.3 1302.5 764.2 1305.0 760.0" fill="none" stroke="#2a2428" stroke-width="3" stroke-linecap="round" />
<path d="M1210.0 752.0 C1215.0 756.7 1230.0 773.7 1240.0 780.0 C1250.0 786.3 1260.8 791.3 1270.0 790.0 C1279.2 788.7 1290.8 775.0 1295.0 772.0" fill="none" stroke="#ece2ea" stroke-width="4" stroke-linecap="round" />
<path d="M1228.0 745.0 C1233.3 750.0 1248.0 767.5 1260.0 775.0 C1272.0 782.5 1289.2 792.2 1300.0 790.0 C1310.8 787.8 1320.8 766.7 1325.0 762.0" fill="none" stroke="#9a9096" stroke-width="2" stroke-linecap="round" />
<path d="M973.0 950.0 C966.7 971.7 977.5 990.0 982.0 1010.0 C986.5 1030.0 994.0 1050.0 1000.0 1070.0 C1006.0 1090.0 1013.0 1111.0 1018.0 1130.0 C1023.0 1149.0 1028.5 1169.0 1030.0 1184.0 C1031.5 1199.0 1027.5 1204.0 1027.0 1220.0 C1026.5 1236.0 1025.0 1262.0 1027.0 1280.0 C1029.0 1298.0 1033.2 1321.0 1039.0 1328.0 C1044.8 1335.0 1055.0 1322.0 1062.0 1322.0 C1069.0 1322.0 1076.3 1335.0 1081.0 1328.0 C1085.7 1321.0 1088.0 1298.0 1090.0 1280.0 C1092.0 1262.0 1092.0 1240.0 1093.0 1220.0 C1094.0 1200.0 1094.5 1185.0 1096.0 1160.0 C1097.5 1135.0 1101.0 1095.0 1102.0 1070.0 C1103.0 1045.0 1103.0 1027.5 1102.0 1010.0 C1101.0 992.5 1099.0 980.0 1096.0 965.0 C1093.0 950.0 1088.5 937.5 1084.0 920.0 C1079.5 902.5 1079.7 866.7 1069.0 860.0 C1058.3 853.3 1036.0 865.0 1020.0 880.0 C1004.0 895.0 979.3 928.3 973.0 950.0 Z" fill="url(#legR)" />
<g clip-path="url(#clipLegR)"><rect x="1000" y="1100" width="110" height="240" fill="url(#legR2)" mask="url(#mLegR2)"/></g>
<path d="M1040.0 1320.0 C1041.3 1317.7 1082.5 1314.0 1084.0 1316.0 C1085.5 1318.0 1085.3 1377.7 1084.0 1380.0 C1082.7 1382.3 1045.5 1386.0 1044.0 1384.0 C1042.5 1382.0 1038.7 1322.3 1040.0 1320.0 Z" fill="url(#sock)" />
<path d="M1034.0 1300.0 C1034.7 1306.7 1036.7 1326.0 1038.0 1340.0 C1039.3 1354.0 1041.3 1376.7 1042.0 1384.0" fill="none" stroke="#050405" stroke-width="7" stroke-linecap="round" />
<path d="M1031.0 1356.0 C1036.8 1351.7 1053.2 1358.3 1062.0 1358.0 C1070.8 1357.7 1079.2 1350.5 1084.0 1354.0 C1088.8 1357.5 1089.8 1366.2 1091.0 1379.0 C1092.2 1391.8 1090.3 1414.5 1091.0 1431.0 C1091.7 1447.5 1092.5 1465.5 1095.0 1478.0 C1097.5 1490.5 1103.2 1496.7 1106.0 1506.0 C1108.8 1515.3 1111.0 1523.0 1112.0 1534.0 C1113.0 1545.0 1113.7 1562.3 1112.0 1572.0 C1110.3 1581.7 1109.8 1587.8 1102.0 1592.0 C1094.2 1596.2 1074.3 1598.8 1065.0 1597.0 C1055.7 1595.2 1050.7 1588.3 1046.0 1581.0 C1041.3 1573.7 1039.5 1565.5 1037.0 1553.0 C1034.5 1540.5 1033.8 1523.2 1031.0 1506.0 C1028.2 1488.8 1022.2 1464.0 1020.0 1450.0 C1017.8 1436.0 1016.8 1433.0 1018.0 1422.0 C1019.2 1411.0 1024.8 1395.0 1027.0 1384.0 C1029.2 1373.0 1025.2 1360.3 1031.0 1356.0 Z" fill="url(#bootR)" />
<g clip-path="url(#clipBootR)">
<ellipse cx="1085" cy="1570" rx="16" ry="12" fill="#f0e8ee" filter="url(#blur6)"/>
<ellipse cx="1080" cy="1520" rx="18" ry="30" fill="#6a6266" filter="url(#blur6)"/>
<path d="M1048 1420 L1092 1410 L1095 1480 L1055 1488 Z" fill="#8a8286" opacity="0.8" filter="url(#blur3)"/>
<path d="M1050.0 1440.0 L1090.0 1430.0" fill="none" stroke="#c8c0c6" stroke-width="2" stroke-linecap="round" />
<path d="M1050.0 1455.0 L1092.0 1447.0" fill="none" stroke="#c8c0c6" stroke-width="2" stroke-linecap="round" />
<path d="M1052.0 1470.0 L1094.0 1462.0" fill="none" stroke="#c8c0c6" stroke-width="2" stroke-linecap="round" />
<path d="M1062 1382 L1090 1376 L1090 1402 L1066 1408 Z" fill="#e0dade"/>
<path d="M1028.0 1360.0 C1026.7 1370.0 1019.7 1396.7 1020.0 1420.0 C1020.3 1443.3 1026.3 1475.0 1030.0 1500.0 C1033.7 1525.0 1040.0 1558.3 1042.0 1570.0" fill="none" stroke="#000000" stroke-width="10" stroke-linecap="round" filter="url(#blur3)"/>
</g>
<path d="M917.0 774.0 C908.8 768.5 908.8 780.7 901.0 787.0 C893.2 793.3 879.3 803.2 870.0 812.0 C860.7 820.8 852.3 830.0 845.0 840.0 C837.7 850.0 830.8 859.2 826.0 872.0 C821.2 884.8 817.8 904.0 816.0 917.0 C814.2 930.0 813.3 937.0 815.0 950.0 C816.7 963.0 821.2 980.0 826.0 995.0 C830.8 1010.0 838.0 1022.5 844.0 1040.0 C850.0 1057.5 856.5 1079.0 862.0 1100.0 C867.5 1121.0 881.5 1156.0 877.0 1166.0 C872.5 1176.0 849.5 1160.8 835.0 1160.0 C820.5 1159.2 802.5 1159.8 790.0 1161.0 C777.5 1162.2 768.5 1165.2 760.0 1167.0 C751.5 1168.8 742.5 1158.2 739.0 1172.0 C735.5 1185.8 725.5 1234.0 739.0 1250.0 C752.5 1266.0 791.5 1261.0 820.0 1268.0 C848.5 1275.0 890.0 1287.2 910.0 1292.0 C930.0 1296.8 931.0 1298.0 940.0 1297.0 C949.0 1296.0 957.0 1291.3 964.0 1286.0 C971.0 1280.7 977.5 1273.5 982.0 1265.0 C986.5 1256.5 988.8 1247.5 991.0 1235.0 C993.2 1222.5 994.5 1207.5 995.0 1190.0 C995.5 1172.5 995.7 1150.0 994.0 1130.0 C992.3 1110.0 988.0 1090.0 985.0 1070.0 C982.0 1050.0 978.0 1030.0 976.0 1010.0 C974.0 990.0 969.0 961.5 973.0 950.0 C977.0 938.5 991.5 945.0 1000.0 941.0 C1008.5 937.0 1016.5 932.0 1024.0 926.0 C1031.5 920.0 1049.0 914.3 1045.0 905.0 C1041.0 895.7 1015.8 884.2 1000.0 870.0 C984.2 855.8 963.8 836.0 950.0 820.0 C936.2 804.0 925.2 779.5 917.0 774.0 Z" fill="url(#legL)" />
<path d="M898 850 Q925 845 945 880 Q920 895 898 850 Z" fill="#f8d8e4" opacity="0.6"/>
<path d="M877.0 1166.0 C866.2 1161.0 849.5 1160.8 835.0 1160.0 C820.5 1159.2 802.5 1159.8 790.0 1161.0 C777.5 1162.2 768.5 1165.2 760.0 1167.0 C751.5 1168.8 742.5 1158.2 739.0 1172.0 C735.5 1185.8 725.5 1234.0 739.0 1250.0 C752.5 1266.0 792.3 1261.3 820.0 1268.0 C847.7 1274.7 886.7 1294.7 905.0 1290.0 C923.3 1285.3 930.8 1256.7 930.0 1240.0 C929.2 1223.3 908.8 1202.3 900.0 1190.0 C891.2 1177.7 887.8 1171.0 877.0 1166.0 Z" fill="url(#shin)" />
<path d="M880 1170 Q905 1195 922 1245 Q912 1262 885 1255 Q868 1220 860 1175 Z" fill="#120508" opacity="0.55" filter="url(#blur6)"/>
<path d="M609.0 1161.0 C617.1 1156.9 637.6 1160.1 646.0 1161.0 C654.4 1161.9 663.9 1166.8 672.0 1168.0 C680.1 1169.2 698.7 1169.3 707.0 1170.0 C715.3 1170.7 727.9 1173.5 734.0 1173.0 C740.1 1172.5 746.9 1167.2 753.0 1166.0 C759.1 1164.8 776.4 1151.9 780.0 1164.0 C783.6 1176.1 784.5 1245.0 780.0 1257.0 C775.5 1269.0 754.5 1255.2 746.0 1254.0 C737.5 1252.8 721.2 1247.3 716.0 1248.0 C710.8 1248.7 711.7 1257.1 707.0 1259.0 C702.3 1260.9 687.9 1259.7 681.0 1262.0 C674.1 1264.3 660.9 1272.4 655.0 1276.0 C649.1 1279.6 641.7 1285.0 637.0 1289.0 C632.3 1293.0 624.7 1300.3 620.0 1306.0 C615.3 1311.7 606.7 1323.9 602.0 1332.0 C597.3 1340.1 590.7 1357.8 585.0 1367.0 C579.3 1376.2 564.9 1394.9 559.0 1401.0 C553.1 1407.1 545.7 1411.4 541.0 1413.0 C536.3 1414.6 528.4 1414.5 524.0 1413.0 C519.6 1411.5 511.3 1406.9 508.0 1402.0 C504.7 1397.1 499.7 1384.1 499.0 1376.0 C498.3 1367.9 500.9 1350.3 503.0 1341.0 C505.1 1331.7 511.1 1315.3 515.0 1306.0 C518.9 1296.7 526.1 1281.5 532.0 1271.0 C537.9 1260.5 551.9 1237.5 559.0 1227.0 C566.1 1216.5 578.3 1200.8 585.0 1192.0 C591.7 1183.2 600.9 1165.1 609.0 1161.0 Z" fill="url(#bootL)" />
<g clip-path="url(#clipBootL)">
<ellipse cx="552" cy="1352" rx="24" ry="52" transform="rotate(32 552 1352)" fill="#ffffff" filter="url(#blur6)"/>
<ellipse cx="600" cy="1270" rx="14" ry="30" transform="rotate(40 600 1270)" fill="#c8c0c6" filter="url(#blur6)"/>
<path d="M606.0 1160.0 C600.3 1167.5 583.0 1189.2 572.0 1205.0 C561.0 1220.8 549.3 1238.3 540.0 1255.0 C530.7 1271.7 522.2 1289.2 516.0 1305.0 C509.8 1320.8 505.3 1335.8 503.0 1350.0 C500.7 1364.2 500.0 1380.0 502.0 1390.0 C504.0 1400.0 508.7 1405.7 515.0 1410.0 C521.3 1414.3 535.8 1415.0 540.0 1416.0" fill="none" stroke="#050405" stroke-width="9" stroke-linecap="round" filter="url(#blur3)"/>
</g>
<path d="M700.0 1172.0 C716.7 1167.7 766.7 1149.8 780.0 1164.0 C793.3 1178.2 790.7 1242.7 780.0 1257.0 C769.3 1271.3 731.0 1254.5 716.0 1250.0 C701.0 1245.5 696.0 1240.0 690.0 1230.0 C684.0 1220.0 678.3 1199.7 680.0 1190.0 C681.7 1180.3 683.3 1176.3 700.0 1172.0 Z" fill="url(#ankle)" />
<path d="M744 1170 Q730 1210 746 1254" stroke="#d8d0d8" stroke-width="2" fill="none"/>
<path d="M688 1235 Q705 1215 725 1232 Q712 1255 690 1258 Z" fill="#b8b0b6" opacity="0.8"/>
<path d="M600 1300 L655 1268 M594 1315 L645 1286 M588 1330 L636 1302" stroke="#d8d0d6" stroke-width="4"/>
<path d="M625 1250 L690 1240 L675 1275 L630 1285 Z" fill="#8a8488" opacity="0.7"/>
<path d="M902.0 615.0 C892.8 620.0 909.3 618.3 910.0 630.0 C910.7 641.7 905.5 669.2 906.0 685.0 C906.5 700.8 911.2 710.2 913.0 725.0 C914.8 739.8 913.3 756.5 917.0 774.0 C920.7 791.5 929.5 810.7 935.0 830.0 C940.5 849.3 943.7 870.0 950.0 890.0 C956.3 910.0 964.7 941.5 973.0 950.0 C981.3 958.5 991.5 945.0 1000.0 941.0 C1008.5 937.0 1016.5 932.0 1024.0 926.0 C1031.5 920.0 1037.5 916.0 1045.0 905.0 C1052.5 894.0 1065.3 876.7 1069.0 860.0 C1072.7 843.3 1067.3 818.3 1067.0 805.0 C1066.7 791.7 1066.2 791.7 1067.0 780.0 C1067.8 768.3 1065.7 743.8 1072.0 735.0 C1078.3 726.2 1096.2 730.8 1105.0 727.0 C1113.8 723.2 1120.7 718.7 1125.0 712.0 C1129.3 705.3 1130.2 695.3 1131.0 687.0 C1131.8 678.7 1131.8 669.5 1130.0 662.0 C1128.2 654.5 1122.8 648.5 1120.0 642.0 C1117.2 635.5 1126.3 628.8 1113.0 623.0 C1099.7 617.2 1064.7 610.8 1040.0 607.0 C1015.3 603.2 988.0 598.7 965.0 600.0 C942.0 601.3 911.2 610.0 902.0 615.0 Z" fill="url(#torso)" />
<ellipse cx="965" cy="662" rx="61" ry="62" fill="url(#brL)"/>
<ellipse cx="1077" cy="668" rx="55" ry="63" fill="url(#brR)"/>
<path d="M948 605 L964 725" stroke="#2a1a20" stroke-width="1.5" fill="none"/>
<path d="M985 728 Q1030 735 1045 780 Q1040 830 1020 860 Q995 840 985 800 Z" fill="#ffffff" opacity="0.7" filter="url(#blur6)"/>
<path d="M948 880 Q985 905 1045 880 Q1030 935 985 948 Q960 930 948 880 Z" fill="url(#crotch)" opacity="0.9"/>
<path d="M1072.0 728.0 C1073.9 725.6 1096.4 724.4 1100.0 724.0 C1103.6 723.6 1124.4 720.4 1126.0 722.0 C1127.6 723.6 1124.5 744.9 1124.0 748.0 C1123.5 751.1 1120.6 766.2 1118.0 768.0 C1115.4 769.8 1088.1 775.5 1085.0 775.0 C1081.9 774.5 1072.9 763.1 1072.0 760.0 C1071.1 756.9 1070.1 730.4 1072.0 728.0 Z" fill="url(#uarmR)" />
<path d="M1074.0 735.0 L1124.0 728.0" fill="none" stroke="#5a1a30" stroke-width="2" stroke-linecap="round" />
<path d="M1074.0 765.0 L1120.0 758.0" fill="none" stroke="#5a1a30" stroke-width="2" stroke-linecap="round" />
<path d="M1121.0 720.0 C1128.2 713.2 1159.3 708.6 1170.0 705.0 C1180.7 701.4 1194.1 695.1 1201.0 693.0 C1207.9 690.9 1216.8 688.3 1222.0 689.0 C1227.2 689.7 1235.3 697.1 1240.0 698.0 C1244.7 698.9 1251.1 695.7 1257.0 696.0 C1262.9 696.3 1279.3 697.9 1284.0 700.0 C1288.7 702.1 1290.9 705.7 1292.0 712.0 C1293.1 718.3 1296.7 742.3 1292.0 747.0 C1287.3 751.7 1263.9 743.9 1257.0 747.0 C1250.1 750.1 1246.9 764.7 1240.0 770.0 C1233.1 775.3 1215.5 782.9 1205.0 787.0 C1194.5 791.1 1171.5 797.7 1161.0 801.0 C1150.5 804.3 1134.1 810.3 1126.0 812.0 C1117.9 813.7 1106.4 814.8 1100.0 814.0 C1093.6 813.2 1082.4 809.2 1078.0 806.0 C1073.6 802.8 1067.8 794.8 1067.0 790.0 C1066.2 785.2 1068.3 773.7 1072.0 770.0 C1075.7 766.3 1089.1 763.9 1095.0 762.0 C1100.9 760.1 1112.5 761.6 1116.0 756.0 C1119.5 750.4 1113.8 726.8 1121.0 720.0 Z" fill="url(#farmR)" />
<ellipse cx="1092" cy="776" rx="22" ry="10" fill="#5a1a34" opacity="0.45" filter="url(#blur6)"/>
<path d="M1240.0 698.0 C1241.7 695.0 1266.5 696.1 1270.0 697.0 C1273.5 697.9 1290.1 709.5 1292.0 712.0 C1293.9 714.5 1298.0 732.3 1298.0 735.0 C1298.0 737.7 1294.4 750.9 1292.0 752.0 C1289.6 753.1 1265.1 752.7 1262.0 752.0 C1258.9 751.3 1246.5 745.6 1245.0 742.0 C1243.5 738.4 1238.3 701.0 1240.0 698.0 Z" fill="url(#cuffR)" />
<path d="M1248 700 L1252 750" stroke="#5a1a30" stroke-width="1.2" opacity="0.5"/>
<path d="M1255 700 L1259 750" stroke="#5a1a30" stroke-width="1.2" opacity="0.5"/>
<path d="M1262 700 L1266 750" stroke="#5a1a30" stroke-width="1.2" opacity="0.5"/>
<path d="M1269 700 L1273 750" stroke="#5a1a30" stroke-width="1.2" opacity="0.5"/>
<path d="M1276 700 L1280 750" stroke="#5a1a30" stroke-width="1.2" opacity="0.5"/>
<path d="M1283 700 L1287 750" stroke="#5a1a30" stroke-width="1.2" opacity="0.5"/>
<path d="M1290 700 L1294 750" stroke="#5a1a30" stroke-width="1.2" opacity="0.5"/>
<path d="M1292.0 722.0 C1293.3 721.1 1309.1 726.3 1312.0 728.0 C1314.9 729.7 1334.7 746.2 1336.0 748.0 C1337.3 749.8 1334.4 754.9 1332.0 755.0 C1329.6 755.1 1302.7 750.9 1300.0 750.0 C1297.3 749.1 1292.5 743.9 1292.0 742.0 C1291.5 740.1 1290.7 722.9 1292.0 722.0 Z" fill="#e0d8de" stroke="#8a8088" stroke-width="1.5"/>
<path d="M1300.0 735.0 L1334.0 752.0" fill="none" stroke="#9a9096" stroke-width="1.5" stroke-linecap="round" />
<path d="M861.0 542.0 C863.9 533.7 885.6 520.4 894.0 517.0 C902.4 513.6 938.4 512.7 945.0 508.0 C951.6 503.3 954.5 471.6 960.0 470.0 C965.5 468.4 992.9 490.8 1000.0 492.0 C1007.1 493.2 1024.4 482.8 1031.0 482.0 C1037.6 481.2 1062.8 479.4 1066.0 484.0 C1069.2 488.6 1058.5 520.7 1063.0 528.0 C1067.5 535.3 1105.8 551.8 1111.0 557.0 C1116.2 562.2 1113.9 573.5 1115.0 580.0 C1116.1 586.5 1122.2 617.7 1122.0 622.0 C1121.8 626.3 1125.6 625.3 1113.0 623.0 C1100.4 620.7 1016.5 599.8 996.0 599.0 C975.5 598.2 919.6 610.9 908.0 615.0 C896.4 619.1 884.3 641.5 880.0 640.0 C875.7 638.5 866.9 609.8 865.0 600.0 C863.1 590.2 858.1 550.3 861.0 542.0 Z" fill="url(#jacket)" />
<path d="M880 540 L912 528 L918 600 L905 615 L885 625 Z" fill="#1a0810" opacity="0.7"/>
<path d="M912 522 L1000 532 L1000 540 L914 532 Z" fill="#b8b0b6"/>
<path d="M918 548 L1000 556 L1000 562 L920 556 Z" fill="#d8b0c0" opacity="0.8"/>
<path d="M954 514 L974 516 L976 574 L958 572 Z" fill="#b8b2b6"/>
<path d="M958 540 L972 541 L972 552 L958 551 Z" fill="#4a4448"/>
<path d="M1004 548 L1036 554 L1036 562 L1004 557 Z" fill="#c0b8bc"/>
<path d="M1008 566 L1040 572 L1040 580 L1008 575 Z" fill="#d0c8cc"/>
<path d="M1072 545 L1092 550 L1096 590 L1078 586 Z" fill="#b0aaae"/>
<path d="M1058 562 L1110 574 L1110 580 L1058 570 Z" fill="#c8c0c4" opacity="0.8"/>
<path d="M935 462 L990 470 L1000 520 L960 525 L930 500 Z" fill="#120608" opacity="0.85"/>
<path d="M950 462 L1003 528 L996 548 L940 482 Z" fill="#8a2a48"/>
<path d="M958 466 L1003 522" stroke="#e070a0" stroke-width="2"/>
<path d="M1063 484 L1075 492 L1040 560 L1028 548 Z" fill="#c8607e"/>
<path d="M1040 488 L1062 486 L1060 520 L1040 530 Z" fill="#5a1a30" opacity="0.8"/>
<path d="M908.0 586.0 C910.9 584.7 989.2 576.8 996.0 577.0 C1002.8 577.2 1109.1 591.5 1113.0 593.0 C1116.9 594.5 1116.9 622.8 1113.0 623.0 C1109.1 623.2 1002.8 599.3 996.0 599.0 C989.2 598.7 910.9 615.4 908.0 615.0 C905.1 614.6 905.1 587.3 908.0 586.0 Z" fill="url(#band)" />
<text x="926" y="605" font-family="Liberation Sans" font-weight="bold" font-size="22" fill="#b8b0b4" transform="rotate(-2 926 605)" letter-spacing="2">SUPER</text>
<text x="1032" y="603" font-family="Liberation Sans" font-weight="bold" font-size="19" fill="#c8c0c4" transform="rotate(9 1032 603)" letter-spacing="1">SOPH</text>
<path d="M861.0 542.0 C856.0 545.3 853.2 563.7 850.0 580.0 C846.8 596.3 842.8 620.0 842.0 640.0 C841.2 660.0 842.0 680.0 845.0 700.0 C848.0 720.0 853.3 745.0 860.0 760.0 C866.7 775.0 877.0 785.0 885.0 790.0 C893.0 795.0 902.2 795.0 908.0 790.0 C913.8 785.0 919.0 775.0 920.0 760.0 C921.0 745.0 916.5 720.0 914.0 700.0 C911.5 680.0 908.2 656.7 905.0 640.0 C901.8 623.3 899.2 613.3 895.0 600.0 C890.8 586.7 885.7 569.7 880.0 560.0 C874.3 550.3 866.0 538.7 861.0 542.0 Z" fill="url(#uarmL)" />
<path d="M848.0 650.0 L912.0 668.0" fill="none" stroke="#4a1828" stroke-width="4" stroke-linecap="round" />
<path d="M850.0 700.0 L915.0 720.0" fill="none" stroke="#4a1828" stroke-width="4" stroke-linecap="round" />
<path d="M858.0 750.0 L918.0 770.0" fill="none" stroke="#4a1828" stroke-width="4" stroke-linecap="round" />
<path d="M675.0 630.0 C680.5 625.0 681.3 617.2 690.0 615.0 C698.7 612.8 714.5 613.7 727.0 617.0 C739.5 620.3 756.2 629.5 765.0 635.0 C773.8 640.5 773.0 643.3 780.0 650.0 C787.0 656.7 798.7 668.3 807.0 675.0 C815.3 681.7 816.2 679.2 830.0 690.0 C843.8 700.8 879.7 726.7 890.0 740.0 C900.3 753.3 896.2 761.7 892.0 770.0 C887.8 778.3 873.7 786.0 865.0 790.0 C856.3 794.0 852.5 795.7 840.0 794.0 C827.5 792.3 806.7 786.5 790.0 780.0 C773.3 773.5 756.7 763.0 740.0 755.0 C723.3 747.0 704.7 738.3 690.0 732.0 C675.3 725.7 660.8 722.3 652.0 717.0 C643.2 711.7 638.2 707.0 637.0 700.0 C635.8 693.0 641.7 684.2 645.0 675.0 C648.3 665.8 652.0 652.5 657.0 645.0 C662.0 637.5 669.5 635.0 675.0 630.0 Z" fill="url(#sleeveL)" />
<path d="M588.0 612.0 C589.5 608.5 625.8 614.2 630.0 615.0 C634.2 615.8 670.5 626.5 672.0 628.0 C673.5 629.5 661.2 642.9 660.0 645.0 C658.8 647.1 649.1 667.8 648.0 670.0 C646.9 672.2 637.4 688.6 637.0 690.0 C636.6 691.4 641.9 698.3 640.0 698.0 C638.1 697.7 602.6 688.3 600.0 684.0 C597.4 679.7 586.5 615.5 588.0 612.0 Z" fill="url(#cuffL)" />
<path d="M592 620 L668 628" stroke="#5a1a34" stroke-width="1.5" opacity="0.6"/>
<path d="M592 626 L665 634" stroke="#5a1a34" stroke-width="1.5" opacity="0.6"/>
<path d="M592 632 L663 640" stroke="#5a1a34" stroke-width="1.5" opacity="0.6"/>
<path d="M592 638 L660 646" stroke="#5a1a34" stroke-width="1.5" opacity="0.6"/>
<path d="M592 644 L657 652" stroke="#5a1a34" stroke-width="1.5" opacity="0.6"/>
<path d="M592 650 L654 658" stroke="#5a1a34" stroke-width="1.5" opacity="0.6"/>
<path d="M592 656 L652 664" stroke="#5a1a34" stroke-width="1.5" opacity="0.6"/>
<path d="M592 662 L649 670" stroke="#5a1a34" stroke-width="1.5" opacity="0.6"/>
<path d="M592 668 L646 676" stroke="#5a1a34" stroke-width="1.5" opacity="0.6"/>
<path d="M592 674 L644 682" stroke="#5a1a34" stroke-width="1.5" opacity="0.6"/>
<path d="M592 680 L641 688" stroke="#5a1a34" stroke-width="1.5" opacity="0.6"/>
<path d="M592 686 L638 694" stroke="#5a1a34" stroke-width="1.5" opacity="0.6"/>
<path d="M587.0 614.0 C585.4 612.0 562.6 610.9 560.0 610.0 C557.4 609.1 536.0 597.2 535.0 597.0 C534.0 596.8 538.5 604.8 540.0 606.0 C541.5 607.2 563.1 620.6 565.0 622.0 C566.9 623.4 577.0 632.9 577.0 634.0 C577.0 635.1 566.9 644.4 565.0 645.0 C563.1 645.6 545.0 646.6 540.0 647.0 C535.0 647.4 469.2 651.0 465.0 652.0 C460.8 653.0 455.9 665.8 456.0 667.0 C456.1 668.2 464.1 675.3 467.0 676.0 C469.9 676.7 508.4 680.6 515.0 681.0 C521.6 681.4 596.1 685.5 600.0 684.0 C603.9 682.5 592.6 653.5 592.0 650.0 C591.4 646.5 588.6 616.0 587.0 614.0 Z" fill="url(#handL)" stroke="#9a8890" stroke-width="2"/>
<path d="M470.0 663.0 L560.0 660.0" fill="none" stroke="#d4b4c4" stroke-width="2" stroke-linecap="round" />
<path d="M475.0 672.0 L570.0 673.0" fill="none" stroke="#c898ac" stroke-width="2" stroke-linecap="round" />
<path d="M770.0 642.0 C775.0 637.5 786.7 623.0 800.0 615.0 C813.3 607.0 841.7 597.5 850.0 594.0" fill="none" stroke="#5a5458" stroke-width="5" stroke-linecap="round" />
<path d="M981.0 440.0 C984.1 435.7 1027.4 434.0 1031.0 438.0 C1034.6 442.0 1036.4 495.2 1035.0 500.0 C1033.6 504.8 1013.3 509.9 1010.0 510.0 C1006.7 510.1 986.9 506.7 985.0 502.0 C983.1 497.3 977.9 444.3 981.0 440.0 Z" fill="url(#neck)" />
<path d="M925.0 300.0 C949.5 289.0 1050.5 288.3 1075.0 295.0 C1099.5 301.7 1072.8 329.0 1072.0 340.0 C1071.2 351.0 1070.7 352.0 1070.0 361.0 C1069.3 370.0 1070.5 383.2 1068.0 394.0 C1065.5 404.8 1061.2 416.8 1055.0 426.0 C1048.8 435.2 1039.2 443.5 1031.0 449.0 C1022.8 454.5 1015.0 458.0 1006.0 459.0 C997.0 460.0 986.2 457.8 977.0 455.0 C967.8 452.2 958.3 449.5 951.0 442.0 C943.7 434.5 936.8 423.5 933.0 410.0 C929.2 396.5 929.3 379.3 928.0 361.0 C926.7 342.7 900.5 311.0 925.0 300.0 Z" fill="url(#face)" />
<g clip-path="url(#clipFace)">
<path d="M930.0 400.0 C932.5 405.3 938.0 423.3 945.0 432.0 C952.0 440.7 962.0 447.0 972.0 452.0 C982.0 457.0 999.5 460.3 1005.0 462.0" fill="none" stroke="#141012" stroke-width="14" stroke-linecap="round" filter="url(#blur3)"/>
<ellipse cx="998" cy="395" rx="9" ry="12" fill="#1a1618" opacity="0.8" filter="url(#blur3)"/>
<path d="M1006 392 Q1050 400 1065 400 Q1055 440 1010 458 Q1030 430 1006 392 Z" fill="#ffffff" opacity="0.7"/>
</g>
<ellipse cx="955" cy="377" rx="20" ry="17" fill="#e8dee4"/>
<ellipse cx="957" cy="377" rx="14" ry="16" fill="#9a4e84"/>
<ellipse cx="957" cy="383" rx="9" ry="8" fill="#d07ab4"/>
<ellipse cx="956" cy="371" rx="6" ry="6" fill="#4a1a3a"/>
<path d="M929 364 Q950 354 978 362" stroke="#1a1216" stroke-width="5" fill="none"/>
<ellipse cx="1047" cy="368" rx="20" ry="16" fill="#f8f2f6"/>
<ellipse cx="1045" cy="369" rx="14" ry="15" fill="#c070a8"/>
<ellipse cx="1045" cy="374" rx="9" ry="8" fill="#f0a0d0"/>
<ellipse cx="1044" cy="363" rx="6" ry="6" fill="#6a2a58"/>
<path d="M1022 360 Q1045 348 1069 356" stroke="#2a1a22" stroke-width="5" fill="none"/>
<path d="M996 424 L1020 423" stroke="#8a7a80" stroke-width="2"/>
<path d="M1035 422 L1103 407" stroke="#e8e0e4" stroke-width="3"/>
<path d="M1035 424 L1103 410" stroke="#5a5054" stroke-width="1"/>
<path d="M876.0 372.0 C878.7 368.1 896.4 363.7 900.0 366.0 C903.6 368.3 910.8 386.6 912.0 395.0 C913.2 403.4 913.0 443.5 912.0 450.0 C911.0 456.5 905.0 460.5 902.0 460.0 C899.0 459.5 884.9 450.5 882.0 445.0 C879.1 439.5 873.6 412.3 873.0 405.0 C872.4 397.7 873.3 375.9 876.0 372.0 Z" fill="url(#hpL)" />
<path d="M1096.0 304.0 C1097.8 298.0 1109.4 296.4 1112.0 300.0 C1114.6 303.6 1121.1 328.0 1122.0 340.0 C1122.9 352.0 1122.4 410.0 1121.0 420.0 C1119.6 430.0 1110.5 439.0 1108.0 440.0 C1105.5 441.0 1097.4 438.0 1096.0 430.0 C1094.6 422.0 1094.0 372.6 1094.0 360.0 C1094.0 347.4 1094.2 310.0 1096.0 304.0 Z" fill="url(#hpR)" />
<path d="M910.0 210.0 C914.0 205.5 925.5 197.8 930.0 195.0 C934.5 192.2 947.5 184.0 955.0 182.0 C962.5 180.0 996.3 174.5 1005.0 175.0 C1013.7 175.5 1035.8 184.0 1042.0 187.0 C1048.2 190.0 1063.2 202.0 1067.0 205.0 C1070.8 208.0 1078.0 213.5 1080.0 217.0 C1082.0 220.5 1085.5 234.2 1087.0 240.0 C1088.5 245.8 1094.0 266.5 1095.0 275.0 C1096.0 283.5 1096.8 315.0 1097.0 325.0 C1097.2 335.0 1097.2 364.5 1097.0 375.0 C1096.8 385.5 1095.5 418.5 1095.0 430.0 C1094.5 441.5 1093.7 485.0 1092.0 490.0 C1090.3 495.0 1079.8 489.0 1078.0 480.0 C1076.2 471.0 1074.7 414.9 1074.0 400.0 C1073.3 385.1 1072.9 338.7 1071.0 331.0 C1069.1 323.3 1058.2 324.3 1055.0 323.0 C1051.8 321.7 1042.8 317.2 1039.0 318.0 C1035.2 318.8 1020.8 331.6 1017.0 331.0 C1013.2 330.4 1004.5 312.5 1001.0 312.0 C997.5 311.5 985.2 324.9 982.0 326.0 C978.8 327.1 971.9 325.2 969.0 323.0 C966.1 320.8 956.5 303.2 953.0 304.0 C949.5 304.8 936.5 323.4 934.0 331.0 C931.5 338.6 928.4 369.1 928.0 380.0 C927.6 390.9 928.8 428.0 930.0 440.0 C931.2 452.0 938.0 492.0 940.0 500.0 C942.0 508.0 951.5 519.5 950.0 520.0 C948.5 520.5 929.5 512.0 925.0 505.0 C920.5 498.0 908.5 461.5 905.0 450.0 C901.5 438.5 892.4 402.0 890.0 390.0 C887.6 378.0 881.9 341.0 881.0 330.0 C880.1 319.0 880.1 289.0 881.0 280.0 C881.9 271.0 887.1 247.0 890.0 240.0 C892.9 233.0 906.0 214.5 910.0 210.0 Z" fill="url(#bangs)" />
<g clip-path="url(#clipBangs)">
<path d="M967.0 180.0 C962.3 190.0 948.3 220.0 939.0 240.0 C929.7 260.0 918.5 283.3 911.0 300.0 C903.5 316.7 896.8 333.3 894.0 340.0" fill="none" stroke="#2a2428" stroke-width="1.6" stroke-linecap="round" />
<path d="M970.3 180.0 C966.2 190.0 953.8 220.0 945.6 240.0 C937.4 260.0 927.5 283.3 920.9 300.0 C914.3 316.7 908.6 333.3 906.1 340.0" fill="none" stroke="#8a8086" stroke-width="1.6" stroke-linecap="round" />
<path d="M973.6 180.0 C970.0 190.0 959.3 220.0 952.2 240.0 C945.1 260.0 936.5 283.3 930.8 300.0 C925.1 316.7 920.3 333.3 918.2 340.0" fill="none" stroke="#ffffff" stroke-width="1.6" stroke-linecap="round" />
<path d="M976.9 180.0 C973.9 190.0 964.8 220.0 958.8 240.0 C952.8 260.0 945.5 283.3 940.7 300.0 C936.0 316.7 932.0 333.3 930.3 340.0" fill="none" stroke="#2a2428" stroke-width="1.6" stroke-linecap="round" />
<path d="M980.2 180.0 C977.7 190.0 970.3 220.0 965.4 240.0 C960.5 260.0 954.4 283.3 950.6 300.0 C946.8 316.7 943.8 333.3 942.4 340.0" fill="none" stroke="#8a8086" stroke-width="1.6" stroke-linecap="round" />
<path d="M983.5 180.0 C981.6 190.0 975.8 220.0 972.0 240.0 C968.2 260.0 963.4 283.3 960.5 300.0 C957.6 316.7 955.5 333.3 954.5 340.0" fill="none" stroke="#ffffff" stroke-width="1.6" stroke-linecap="round" />
<path d="M986.8 180.0 C985.4 190.0 981.3 220.0 978.6 240.0 C975.9 260.0 972.4 283.3 970.4 300.0 C968.4 316.7 967.2 333.3 966.6 340.0" fill="none" stroke="#2a2428" stroke-width="1.6" stroke-linecap="round" />
<path d="M990.1 180.0 C989.3 190.0 986.8 220.0 985.2 240.0 C983.6 260.0 981.4 283.3 980.3 300.0 C979.2 316.7 979.0 333.3 978.7 340.0" fill="none" stroke="#8a8086" stroke-width="1.6" stroke-linecap="round" />
<path d="M993.4 180.0 C993.1 190.0 992.3 220.0 991.8 240.0 C991.3 260.0 990.4 283.3 990.2 300.0 C990.0 316.7 990.7 333.3 990.8 340.0" fill="none" stroke="#ffffff" stroke-width="1.6" stroke-linecap="round" />
<path d="M996.7 180.0 C997.0 190.0 997.8 220.0 998.4 240.0 C999.0 260.0 999.4 283.3 1000.1 300.0 C1000.9 316.7 1002.4 333.3 1002.9 340.0" fill="none" stroke="#2a2428" stroke-width="1.6" stroke-linecap="round" />
<path d="M1000.0 180.0 C1000.8 190.0 1003.3 220.0 1005.0 240.0 C1006.7 260.0 1008.3 283.3 1010.0 300.0 C1011.7 316.7 1014.2 333.3 1015.0 340.0" fill="none" stroke="#8a8086" stroke-width="1.6" stroke-linecap="round" />
<path d="M1003.3 180.0 C1004.7 190.0 1008.8 220.0 1011.6 240.0 C1014.4 260.0 1017.3 283.3 1019.9 300.0 C1022.5 316.7 1025.9 333.3 1027.1 340.0" fill="none" stroke="#ffffff" stroke-width="1.6" stroke-linecap="round" />
<path d="M1006.6 180.0 C1008.5 190.0 1014.3 220.0 1018.2 240.0 C1022.1 260.0 1026.3 283.3 1029.8 300.0 C1033.3 316.7 1037.6 333.3 1039.2 340.0" fill="none" stroke="#2a2428" stroke-width="1.6" stroke-linecap="round" />
<path d="M1009.9 180.0 C1012.4 190.0 1019.8 220.0 1024.8 240.0 C1029.8 260.0 1035.3 283.3 1039.7 300.0 C1044.1 316.7 1049.4 333.3 1051.3 340.0" fill="none" stroke="#8a8086" stroke-width="1.6" stroke-linecap="round" />
<path d="M1013.2 180.0 C1016.2 190.0 1025.3 220.0 1031.4 240.0 C1037.5 260.0 1044.3 283.3 1049.6 300.0 C1054.9 316.7 1061.1 333.3 1063.4 340.0" fill="none" stroke="#ffffff" stroke-width="1.6" stroke-linecap="round" />
<path d="M1016.5 180.0 C1020.1 190.0 1030.8 220.0 1038.0 240.0 C1045.2 260.0 1053.2 283.3 1059.5 300.0 C1065.8 316.7 1072.8 333.3 1075.5 340.0" fill="none" stroke="#2a2428" stroke-width="1.6" stroke-linecap="round" />
<path d="M1019.8 180.0 C1023.9 190.0 1036.3 220.0 1044.6 240.0 C1052.9 260.0 1062.2 283.3 1069.4 300.0 C1076.6 316.7 1084.6 333.3 1087.6 340.0" fill="none" stroke="#8a8086" stroke-width="1.6" stroke-linecap="round" />
<path d="M890.0 250.0 C889.2 263.3 884.2 301.7 885.0 330.0 C885.8 358.3 890.0 391.7 895.0 420.0 C900.0 448.3 911.7 486.7 915.0 500.0" fill="none" stroke="#1e1a1c" stroke-width="1.6" stroke-linecap="round" />
<path d="M898.0 250.0 C897.2 263.3 892.2 301.7 893.0 330.0 C893.8 358.3 898.0 391.7 903.0 420.0 C908.0 448.3 919.7 486.7 923.0 500.0" fill="none" stroke="#f4eef2" stroke-width="1.6" stroke-linecap="round" />
<path d="M906.0 250.0 C905.2 263.3 900.2 301.7 901.0 330.0 C901.8 358.3 906.0 391.7 911.0 420.0 C916.0 448.3 927.7 486.7 931.0 500.0" fill="none" stroke="#1e1a1c" stroke-width="1.6" stroke-linecap="round" />
<path d="M914.0 250.0 C913.2 263.3 908.2 301.7 909.0 330.0 C909.8 358.3 914.0 391.7 919.0 420.0 C924.0 448.3 935.7 486.7 939.0 500.0" fill="none" stroke="#f4eef2" stroke-width="1.6" stroke-linecap="round" />
<path d="M922.0 250.0 C921.2 263.3 916.2 301.7 917.0 330.0 C917.8 358.3 922.0 391.7 927.0 420.0 C932.0 448.3 943.7 486.7 947.0 500.0" fill="none" stroke="#1e1a1c" stroke-width="1.6" stroke-linecap="round" />
</g>
<path d="M960.0 205.0 C957.0 214.2 947.0 240.8 942.0 260.0 C937.0 279.2 932.7 296.7 930.0 320.0 C927.3 343.3 925.7 373.3 926.0 400.0 C926.3 426.7 931.0 466.7 932.0 480.0" fill="none" stroke="#1a1618" stroke-width="6" stroke-linecap="round" />
<path d="M945.0 215.0 C939.5 227.5 918.7 262.5 912.0 290.0 C905.3 317.5 904.5 350.0 905.0 380.0 C905.5 410.0 913.3 455.0 915.0 470.0" fill="none" stroke="#2a2428" stroke-width="4" stroke-linecap="round" />
<path d="M990.0 200.0 C989.2 208.3 984.2 233.3 985.0 250.0 C985.8 266.7 993.3 291.7 995.0 300.0" fill="none" stroke="#5a5056" stroke-width="4" stroke-linecap="round" />
<path d="M1030.0 200.0 C1032.5 208.3 1040.0 231.7 1045.0 250.0 C1050.0 268.3 1057.5 300.0 1060.0 310.0" fill="none" stroke="#6a6066" stroke-width="3" stroke-linecap="round" />
<path d="M1000.0 190.0 C1001.7 198.3 1005.0 221.7 1010.0 240.0 C1015.0 258.3 1026.7 290.0 1030.0 300.0" fill="none" stroke="#7a7076" stroke-width="2" stroke-linecap="round" />
<path d="M955.0 192.0 C964.2 198.3 995.0 213.7 1010.0 230.0 C1025.0 246.3 1035.8 274.2 1045.0 290.0 C1054.2 305.8 1061.7 319.2 1065.0 325.0" fill="none" stroke="#ffffff" stroke-width="3" stroke-linecap="round" />
<path d="M925.0 240.0 C924.5 248.3 921.5 275.0 922.0 290.0 C922.5 305.0 927.0 323.3 928.0 330.0" fill="none" stroke="#141012" stroke-width="5" stroke-linecap="round" />
<path d="M975.0 230.0 C976.7 238.3 980.2 263.3 985.0 280.0 C989.8 296.7 1000.8 321.7 1004.0 330.0" fill="none" stroke="#2a2428" stroke-width="4" stroke-linecap="round" />
<path d="M1010.0 235.0 C1013.3 244.2 1024.2 276.2 1030.0 290.0 C1035.8 303.8 1042.5 313.3 1045.0 318.0" fill="none" stroke="#3a3236" stroke-width="3" stroke-linecap="round" />
<path d="M960.0 250.0 C959.7 258.3 958.8 290.0 958.0 300.0 C957.2 310.0 955.5 308.3 955.0 310.0" fill="none" stroke="#4a4246" stroke-width="3" stroke-linecap="round" />
<path d="M1082.0 250.0 C1083.0 263.3 1087.3 301.7 1088.0 330.0 C1088.7 358.3 1086.7 395.0 1086.0 420.0 C1085.3 445.0 1084.3 470.0 1084.0 480.0" fill="none" stroke="#ffffff" stroke-width="3" stroke-linecap="round" />
<path d="M862.0 142.0 C865.2 136.8 874.2 136.8 880.0 139.0 C885.8 141.2 891.2 147.8 897.0 155.0 C902.8 162.2 911.7 173.7 915.0 182.0 C918.3 190.3 917.8 198.7 917.0 205.0 C916.2 211.3 914.5 214.2 910.0 220.0 C905.5 225.8 895.8 239.7 890.0 240.0 C884.2 240.3 879.3 229.5 875.0 222.0 C870.7 214.5 866.3 203.7 864.0 195.0 C861.7 186.3 861.3 178.8 861.0 170.0 C860.7 161.2 858.8 147.2 862.0 142.0 Z" fill="url(#earL)" />
<path d="M877 188 L893 175 L905 195 L889 208 Z" fill="#5a5056"/>
<path d="M1055.0 130.0 C1059.2 127.3 1067.5 117.8 1072.0 119.0 C1076.5 120.2 1079.5 129.3 1082.0 137.0 C1084.5 144.7 1086.5 154.5 1087.0 165.0 C1087.5 175.5 1087.0 191.3 1085.0 200.0 C1083.0 208.7 1079.2 216.2 1075.0 217.0 C1070.8 217.8 1065.8 211.2 1060.0 205.0 C1054.2 198.8 1043.8 188.3 1040.0 180.0 C1036.2 171.7 1035.8 162.5 1037.0 155.0 C1038.2 147.5 1044.0 139.2 1047.0 135.0 C1050.0 130.8 1050.8 132.7 1055.0 130.0 Z" fill="url(#earR)" />
<path d="M1048 170 L1063 158 L1075 176 L1060 190 Z" fill="#5a5056"/></svg>
<div style="left:8px;top:238px;width:438px;height:1331px;background:#4a4a55;"></div>
<div style="left:10px;top:240px;width:434px;height:1327px;background:#1e1e1e;"></div>
<div style="left:10px;top:240px;width:434px;height:36px;background:#294a7a;"></div>
<svg style="left:22px;top:249px" width="18" height="17"><path d="M0 0 L18 0 L9.0 17 Z" fill="#fff"/></svg>
<span class="t" style="left:60px;top:243px;color:#fff;">Controls</span>
<div class="clip" style="left:10px;top:276px;width:430px;height:1290px;">
<div style="left:-10px;top:-276px;width:2052px;height:1600px;">
<div style="left:24px;top:292px;width:246px;height:38px;background:#23354f;"></div>
<div style="left:270px;top:292px;width:38px;height:38px;background:#2d4e76;"></div>
<svg style="left:280px;top:303px" width="18" height="17"><path d="M0 0 L18 0 L9.0 17 Z" fill="#fff"/></svg>
<span class="t" style="left:32px;top:298px;color:#fff;">Off</span>
<span class="t" style="left:316px;top:298px;color:#fff;">SkyBox Ch</span>
<div style="left:24px;top:338px;width:53px;height:38px;background:#23354f;"></div>
<div class="clip" style="left:24px;top:338px;width:53px;height:38px;"><span class="t" style="left:5.5px;top:6px">255</span></div>
<div style="left:85px;top:338px;width:53px;height:38px;background:#23354f;"></div>
<div class="clip" style="left:85px;top:338px;width:53px;height:38px;"><span class="t" style="left:5.5px;top:6px">255</span></div>
<div style="left:146px;top:338px;width:53px;height:38px;background:#23354f;"></div>
<div class="clip" style="left:146px;top:338px;width:53px;height:38px;"><span class="t" style="left:5.5px;top:6px">255</span></div>
<div style="left:207px;top:338px;width:55px;height:38px;background:#23354f;"></div>
<div class="clip" style="left:207px;top:338px;width:55px;height:38px;"><span class="t" style="left:6.5px;top:6px">255</span></div>
<div style="left:270px;top:338px;width:38px;height:38px;background:#fff;"></div>
<span class="t" style="left:316px;top:344px;color:#fff;">Background</span>
<span class="t" style="left:24px;top:384px;color:#fff;">Cube Transforms</span>
<div style="left:24px;top:418px;width:38px;height:38px;background:#23354f;"></div>
<span class="t" style="left:70px;top:424px;color:#fff;">Rotate Cube</span>
<div style="left:24px;top:464px;width:89px;height:38px;background:#23354f;"></div>
<div class="clip" style="left:24px;top:464px;width:89px;height:38px;"><span class="t" style="left:9.5px;top:6px">1.000</span></div>
<div style="left:121px;top:464px;width:89px;height:38px;background:#23354f;"></div>
<div class="clip" style="left:121px;top:464px;width:89px;height:38px;"><span class="t" style="left:9.5px;top:6px">1.000</span></div>
<div style="left:218px;top:464px;width:90px;height:38px;background:#23354f;"></div>
<div class="clip" style="left:218px;top:464px;width:90px;height:38px;"><span class="t" style="left:10.0px;top:6px">1.000</span></div>
<span class="t" style="left:316px;top:470px;color:#fff;">Cube Scale</span>
<div style="left:24px;top:510px;width:89px;height:38px;background:#23354f;"></div>
<div class="clip" style="left:24px;top:510px;width:89px;height:38px;"><span class="t" style="left:9.5px;top:6px">0.000</span></div>
<div style="left:121px;top:510px;width:89px;height:38px;background:#23354f;"></div>
<div class="clip" style="left:121px;top:510px;width:89px;height:38px;"><span class="t" style="left:9.5px;top:6px">0.000</span></div>
<div style="left:218px;top:510px;width:90px;height:38px;background:#23354f;"></div>
<div class="clip" style="left:218px;top:510px;width:90px;height:38px;"><span class="t" style="left:10.0px;top:6px">0.000</span></div>
<span class="t" style="left:316px;top:516px;color:#fff;">Cube Pos</span>
<div style="left:24px;top:556px;width:89px;height:38px;background:#23354f;"></div>
<div class="clip" style="left:24px;top:556px;width:89px;height:38px;"><span class="t" style="left:23.5px;top:6px">0.0</span></div>
<div style="left:121px;top:556px;width:89px;height:38px;background:#23354f;"></div>
<div class="clip" style="left:121px;top:556px;width:89px;height:38px;"><span class="t" style="left:23.5px;top:6px">0.0</span></div>
<div style="left:218px;top:556px;width:90px;height:38px;background:#23354f;"></div>
<div class="clip" style="left:218px;top:556px;width:90px;height:38px;"><span class="t" style="left:24.0px;top:6px">0.0</span></div>
<span class="t" style="left:316px;top:562px;color:#fff;">Cube Rotation</span>
<div style="left:24px;top:602px;width:406px;height:2px;background:#46464f;"></div>
<span class="t" style="left:24px;top:610px;color:#fff;">Camera</span>
<div style="left:24px;top:644px;width:86px;height:38px;background:#2d4e76;"></div>
<span class="t" style="left:32px;top:650px;color:#fff;">Reset</span>
<div style="left:24px;top:690px;width:284px;height:38px;background:#23354f;"></div>
<div style="left:52px;top:694px;width:24px;height:30px;background:#3d85e0;"></div>
<div class="clip" style="left:24px;top:690px;width:284px;height:38px;"><span class="t" style="left:114.0px;top:6px">55.0</span></div>
<span class="t" style="left:316px;top:696px;color:#fff;">Camera Speed</span>
<div style="left:24px;top:736px;width:89px;height:38px;background:#23354f;"></div>
<div class="clip" style="left:24px;top:736px;width:89px;height:38px;"><span class="t" style="left:2.5px;top:6px">-7.379</span></div>
<div style="left:121px;top:736px;width:89px;height:38px;background:#23354f;"></div>
<div class="clip" style="left:121px;top:736px;width:89px;height:38px;"><span class="t" style="left:0px;top:6px">111.111</span></div>
<div style="left:218px;top:736px;width:90px;height:38px;background:#23354f;"></div>
<div class="clip" style="left:218px;top:736px;width:90px;height:38px;"><span class="t" style="left:0px;top:6px">-84.821</span></div>
<span class="t" style="left:316px;top:742px;color:#fff;">Camera Pos</span>
<div style="left:24px;top:782px;width:284px;height:38px;background:#23354f;"></div>
<div style="left:196px;top:786px;width:24px;height:30px;background:#3d85e0;"></div>
<div class="clip" style="left:24px;top:782px;width:284px;height:38px;"><span class="t" style="left:100.0px;top:6px">90.000</span></div>
<span class="t" style="left:316px;top:788px;color:#fff;">Camera FOV</span>
<div style="left:24px;top:828px;width:138px;height:38px;background:#23354f;"></div>
<div class="clip" style="left:24px;top:828px;width:138px;height:38px;"><span class="t" style="left:0px;top:6px">Near: 1.000</span></div>
<div style="left:170px;top:828px;width:138px;height:38px;background:#23354f;"></div>
<div class="clip" style="left:170px;top:828px;width:138px;height:38px;"><span class="t" style="left:0px;top:6px">Far: 1000.0</span></div>
<span class="t" style="left:316px;top:834px;color:#fff;">Near/Far</span>
<div style="left:24px;top:874px;width:406px;height:2px;background:#46464f;"></div>
<span class="t" style="left:24px;top:882px;color:#fff;">Shading</span>
<div style="left:24px;top:916px;width:246px;height:38px;background:#23354f;"></div>
<div style="left:270px;top:916px;width:38px;height:38px;background:#2d4e76;"></div>
<svg style="left:280px;top:927px" width="18" height="17"><path d="M0 0 L18 0 L9.0 17 Z" fill="#fff"/></svg>
<span class="t" style="left:32px;top:922px;color:#fff;">Blinn-Phong</span>
<span class="t" style="left:316px;top:922px;color:#fff;">Shading Mode</span>
<div style="left:24px;top:962px;width:38px;height:38px;background:#23354f;"></div>
<svg style="left:24px;top:962px" width="38" height="38"><path d="M7 19 L15 28 L31 10" stroke="#4296fa" stroke-width="5" fill="none"/></svg>
<span class="t" style="left:70px;top:968px;color:#fff;">Enable Normal Map</span>
<div style="left:24px;top:1008px;width:38px;height:38px;background:#23354f;"></div>
<span class="t" style="left:70px;top:1014px;color:#fff;">Use Specular Map</span>
<div style="left:24px;top:1054px;width:406px;height:2px;background:#46464f;"></div>
<span class="t" style="left:24px;top:1062px;color:#fff;">Light</span>
<div style="left:24px;top:1096px;width:89px;height:38px;background:#23354f;"></div>
<div class="clip" style="left:24px;top:1096px;width:89px;height:38px;"><span class="t" style="left:2.5px;top:6px">-0.650</span></div>
<div style="left:121px;top:1096px;width:89px;height:38px;background:#23354f;"></div>
<div class="clip" style="left:121px;top:1096px;width:89px;height:38px;"><span class="t" style="left:9.5px;top:6px">0.000</span></div>
<div style="left:218px;top:1096px;width:90px;height:38px;background:#23354f;"></div>
<div class="clip" style="left:218px;top:1096px;width:90px;height:38px;"><span class="t" style="left:10.0px;top:6px">1.000</span></div>
<span class="t" style="left:316px;top:1102px;color:#fff;">Light Dir</span>
<div style="left:24px;top:1142px;width:53px;height:38px;background:#23354f;"></div>
<div class="clip" style="left:24px;top:1142px;width:53px;height:38px;"><span class="t" style="left:5.5px;top:6px">  0</span></div>
<div style="left:85px;top:1142px;width:53px;height:38px;background:#23354f;"></div>
<div class="clip" style="left:85px;top:1142px;width:53px;height:38px;"><span class="t" style="left:5.5px;top:6px">  0</span></div>
<div style="left:146px;top:1142px;width:53px;height:38px;background:#23354f;"></div>
<div class="clip" style="left:146px;top:1142px;width:53px;height:38px;"><span class="t" style="left:5.5px;top:6px">  0</span></div>
<div style="left:207px;top:1142px;width:55px;height:38px;background:#23354f;"></div>
<div class="clip" style="left:207px;top:1142px;width:55px;height:38px;"><span class="t" style="left:6.5px;top:6px">255</span></div>
<div style="left:270px;top:1142px;width:38px;height:38px;background:#000;"></div>
<span class="t" style="left:316px;top:1148px;color:#fff;">Ambient</span>
<div style="left:24px;top:1188px;width:53px;height:38px;background:#23354f;"></div>
<div class="clip" style="left:24px;top:1188px;width:53px;height:38px;"><span class="t" style="left:5.5px;top:6px">255</span></div>
<div style="left:85px;top:1188px;width:53px;height:38px;background:#23354f;"></div>
<div class="clip" style="left:85px;top:1188px;width:53px;height:38px;"><span class="t" style="left:5.5px;top:6px">255</span></div>
<div style="left:146px;top:1188px;width:53px;height:38px;background:#23354f;"></div>
<div class="clip" style="left:146px;top:1188px;width:53px;height:38px;"><span class="t" style="left:5.5px;top:6px">255</span></div>
<div style="left:207px;top:1188px;width:55px;height:38px;background:#23354f;"></div>
<div class="clip" style="left:207px;top:1188px;width:55px;height:38px;"><span class="t" style="left:6.5px;top:6px">255</span></div>
<div style="left:270px;top:1188px;width:38px;height:38px;background:#fff;"></div>
<span class="t" style="left:316px;top:1194px;color:#fff;">Diffuse</span>
<div style="left:24px;top:1234px;width:53px;height:38px;background:#23354f;"></div>
<div class="clip" style="left:24px;top:1234px;width:53px;height:38px;"><span class="t" style="left:5.5px;top:6px">255</span></div>
<div style="left:85px;top:1234px;width:53px;height:38px;background:#23354f;"></div>
<div class="clip" style="left:85px;top:1234px;width:53px;height:38px;"><span class="t" style="left:5.5px;top:6px">255</span></div>
<div style="left:146px;top:1234px;width:53px;height:38px;background:#23354f;"></div>
<div class="clip" style="left:146px;top:1234px;width:53px;height:38px;"><span class="t" style="left:5.5px;top:6px">255</span></div>
<div style="left:207px;top:1234px;width:55px;height:38px;background:#23354f;"></div>
<div class="clip" style="left:207px;top:1234px;width:55px;height:38px;"><span class="t" style="left:6.5px;top:6px">255</span></div>
<div style="left:270px;top:1234px;width:38px;height:38px;background:#fff;"></div>
<span class="t" style="left:316px;top:1240px;color:#fff;">Specular</span>
<div style="left:24px;top:1280px;width:406px;height:2px;background:#46464f;"></div>
<span class="t" style="left:24px;top:1288px;color:#fff;">Material</span>
<div style="left:24px;top:1322px;width:53px;height:38px;background:#23354f;"></div>
<div class="clip" style="left:24px;top:1322px;width:53px;height:38px;"><span class="t" style="left:5.5px;top:6px">255</span></div>
<div style="left:85px;top:1322px;width:53px;height:38px;background:#23354f;"></div>
<div class="clip" style="left:85px;top:1322px;width:53px;height:38px;"><span class="t" style="left:5.5px;top:6px">255</span></div>
<div style="left:146px;top:1322px;width:53px;height:38px;background:#23354f;"></div>
<div class="clip" style="left:146px;top:1322px;width:53px;height:38px;"><span class="t" style="left:5.5px;top:6px">255</span></div>
<div style="left:207px;top:1322px;width:55px;height:38px;background:#23354f;"></div>
<div class="clip" style="left:207px;top:1322px;width:55px;height:38px;"><span class="t" style="left:6.5px;top:6px">255</span></div>
<div style="left:270px;top:1322px;width:38px;height:38px;background:#fff;"></div>
<span class="t" style="left:316px;top:1328px;color:#fff;">Ambient (</span>
<div style="left:24px;top:1368px;width:53px;height:38px;background:#23354f;"></div>
<div class="clip" style="left:24px;top:1368px;width:53px;height:38px;"><span class="t" style="left:5.5px;top:6px">255</span></div>
<div style="left:85px;top:1368px;width:53px;height:38px;background:#23354f;"></div>
<div class="clip" style="left:85px;top:1368px;width:53px;height:38px;"><span class="t" style="left:5.5px;top:6px">255</span></div>
<div style="left:146px;top:1368px;width:53px;height:38px;background:#23354f;"></div>
<div class="clip" style="left:146px;top:1368px;width:53px;height:38px;"><span class="t" style="left:5.5px;top:6px">255</span></div>
<div style="left:207px;top:1368px;width:55px;height:38px;background:#23354f;"></div>
<div class="clip" style="left:207px;top:1368px;width:55px;height:38px;"><span class="t" style="left:6.5px;top:6px">255</span></div>
<div style="left:270px;top:1368px;width:38px;height:38px;background:#fff;"></div>
<span class="t" style="left:316px;top:1374px;color:#fff;">Diffuse (</span>
<div style="left:24px;top:1414px;width:53px;height:38px;background:#23354f;"></div>
<div class="clip" style="left:24px;top:1414px;width:53px;height:38px;"><span class="t" style="left:5.5px;top:6px">255</span></div>
<div style="left:85px;top:1414px;width:53px;height:38px;background:#23354f;"></div>
<div class="clip" style="left:85px;top:1414px;width:53px;height:38px;"><span class="t" style="left:5.5px;top:6px">255</span></div>
<div style="left:146px;top:1414px;width:53px;height:38px;background:#23354f;"></div>
<div class="clip" style="left:146px;top:1414px;width:53px;height:38px;"><span class="t" style="left:5.5px;top:6px">255</span></div>
<div style="left:207px;top:1414px;width:55px;height:38px;background:#23354f;"></div>
<div class="clip" style="left:207px;top:1414px;width:55px;height:38px;"><span class="t" style="left:0px;top:6px">8160</span></div>
<div style="left:270px;top:1414px;width:38px;height:38px;background:#fff;"></div>
<span class="t" style="left:316px;top:1420px;color:#fff;">Specular</span>
<div style="left:24px;top:1460px;width:284px;height:38px;background:#23354f;"></div>
<div class="clip" style="left:24px;top:1460px;width:284px;height:38px;"><span class="t" style="left:100.0px;top:6px">32.000</span></div>
<span class="t" style="left:316px;top:1466px;color:#fff;">Shininess</span>
<div style="left:24px;top:1506px;width:53px;height:38px;background:#23354f;"></div>
<div class="clip" style="left:24px;top:1506px;width:53px;height:38px;"><span class="t" style="left:5.5px;top:6px">  0</span></div>
<div style="left:85px;top:1506px;width:53px;height:38px;background:#23354f;"></div>
<div class="clip" style="left:85px;top:1506px;width:53px;height:38px;"><span class="t" style="left:5.5px;top:6px">  0</span></div>
<div style="left:146px;top:1506px;width:53px;height:38px;background:#23354f;"></div>
<div class="clip" style="left:146px;top:1506px;width:53px;height:38px;"><span class="t" style="left:5.5px;top:6px">  0</span></div>
<div style="left:207px;top:1506px;width:55px;height:38px;background:#23354f;"></div>
<div class="clip" style="left:207px;top:1506px;width:55px;height:38px;"><span class="t" style="left:6.5px;top:6px">  0</span></div>
<div style="left:270px;top:1506px;width:38px;height:38px;background:conic-gradient(#808080 25%,#c8c8c8 0 50%,#808080 0 75%,#c8c8c8 0);background-size:19px 19px;"></div>
<span class="t" style="left:316px;top:1512px;color:#fff;">Reflect (</span>
<div style="left:24px;top:1552px;width:406px;height:2px;background:#46464f;"></div>
</div></div>
<svg style="left:418px;top:1541px" width="26" height="26"><path d="M26 0 L26 26 L0 26 Z" fill="#2a4a70"/></svg>
<div style="left:1190px;top:82px;width:840px;height:359px;background:#4a4a55;"></div>
<div style="left:1192px;top:84px;width:836px;height:355px;background:#1e1e1e;"></div>
<div style="left:1192px;top:84px;width:836px;height:36px;background:#0a0a0a;"></div>
<span class="t" style="left:1200px;top:88px;color:#fff;">System Info</span>
<span class="t" style="left:1206px;top:136px;color:#fff;">FPS : 593.6</span>
<div style="left:1206px;top:170px;width:808px;height:2px;background:#46464f;"></div>
<span class="t" style="left:1206px;top:178px;color:#fff;">GPU : NVIDIA GeForce RTX 3060</span>
<span class="t" style="left:1206px;top:212px;color:#fff;">CPU : 13th Gen Intel(R) Core(TM) i9-13900KF (32 cores)</span>
<div style="left:1206px;top:246px;width:808px;height:2px;background:#46464f;"></div>
<span class="t" style="left:1206px;top:254px;color:#fff;">RAM : 32.99 GB / 127.84 GB</span>
<span class="t" style="left:1206px;top:288px;color:#fff;">VRAM : 1.63 GB / 11.08 GB</span>
<div style="left:1416px;top:456px;width:644px;height:1033px;background:#4a4a55;"></div>
<div style="left:1418px;top:458px;width:642px;height:1029px;background:#1e1e1e;"></div>
<div style="left:1418px;top:458px;width:642px;height:36px;background:#0a0a0a;"></div>
<svg style="left:1430px;top:467px" width="18" height="17"><path d="M0 0 L18 0 L9.0 17 Z" fill="#fff"/></svg>
<span class="t" style="left:1467px;top:462px;color:#fff;">Model Loader (FBX / OBJ / PMX)</span>
<div style="left:1432px;top:510px;width:38px;height:38px;background:#23354f;"></div>
<span class="t" style="left:1478px;top:516px;color:#fff;">Repro alpha occlusion (DepthWrite+ConstBlend)</span>
<div style="left:1432px;top:556px;width:508px;height:38px;background:#23354f;"></div>
<div style="left:1940px;top:556px;width:38px;height:38px;background:#2d4e76;"></div>
<svg style="left:1950px;top:567px" width="18" height="17"><path d="M0 0 L18 0 L9.0 17 Z" fill="#fff"/></svg>
<span class="t" style="left:1440px;top:562px;color:#fff;">Model</span>
<span class="t" style="left:1986px;top:562px;color:#fff;">Render Mode</span>
<div style="left:1432px;top:602px;width:226px;height:38px;background:#2d4e76;"></div>
<span class="t" style="left:1440px;top:608px;color:#fff;">Browse Model...</span>
<div style="left:1674px;top:602px;width:184px;height:38px;background:#2d4e76;"></div>
<span class="t" style="left:1682px;top:608px;color:#fff;">Unload Model</span>
<span class="t" style="left:1432px;top:648px;color:#fff;">Models</span>
<div style="left:1432px;top:682px;width:618px;height:2px;background:#46464f;"></div>
<span class="t" style="left:1432px;top:690px;color:#fff;">Model #0 : Alice</span>
<div style="left:1432px;top:724px;width:176px;height:38px;background:#23354f;"></div>
<div class="clip" style="left:1432px;top:724px;width:176px;height:38px;"><span class="t" style="left:53.0px;top:6px">0.000</span></div>
<div style="left:1616px;top:724px;width:176px;height:38px;background:#23354f;"></div>
<div class="clip" style="left:1616px;top:724px;width:176px;height:38px;"><span class="t" style="left:53.0px;top:6px">0.000</span></div>
<div style="left:1800px;top:724px;width:178px;height:38px;background:#23354f;"></div>
<div class="clip" style="left:1800px;top:724px;width:178px;height:38px;"><span class="t" style="left:54.0px;top:6px">0.000</span></div>
<span class="t" style="left:1986px;top:730px;color:#fff;">Position</span>
<div style="left:1432px;top:770px;width:176px;height:38px;background:#23354f;"></div>
<div class="clip" style="left:1432px;top:770px;width:176px;height:38px;"><span class="t" style="left:67.0px;top:6px">0.0</span></div>
<div style="left:1616px;top:770px;width:176px;height:38px;background:#23354f;"></div>
<div class="clip" style="left:1616px;top:770px;width:176px;height:38px;"><span class="t" style="left:67.0px;top:6px">0.0</span></div>
<div style="left:1800px;top:770px;width:178px;height:38px;background:#23354f;"></div>
<div class="clip" style="left:1800px;top:770px;width:178px;height:38px;"><span class="t" style="left:68.0px;top:6px">0.0</span></div>
<span class="t" style="left:1986px;top:776px;color:#fff;">Rotation</span>
<div style="left:1432px;top:816px;width:176px;height:38px;background:#23354f;"></div>
<div class="clip" style="left:1432px;top:816px;width:176px;height:38px;"><span class="t" style="left:53.0px;top:6px">1.000</span></div>
<div style="left:1616px;top:816px;width:176px;height:38px;background:#23354f;"></div>
<div class="clip" style="left:1616px;top:816px;width:176px;height:38px;"><span class="t" style="left:53.0px;top:6px">1.000</span></div>
<div style="left:1800px;top:816px;width:178px;height:38px;background:#23354f;"></div>
<div class="clip" style="left:1800px;top:816px;width:178px;height:38px;"><span class="t" style="left:54.0px;top:6px">1.000</span></div>
<span class="t" style="left:1986px;top:822px;color:#fff;">Scale</span>
<div style="left:1432px;top:862px;width:38px;height:38px;background:#23354f;"></div>
<span class="t" style="left:1478px;top:868px;color:#fff;">Auto Rotate (Yaw)</span>
<span class="t" style="left:1432px;top:908px;color:#fff;">FBX Animations</span>
<div style="left:1432px;top:942px;width:628px;height:136px;background:#23354f;"></div>
<div style="left:1432px;top:942px;width:628px;height:36px;background:#2d5484;"></div>
<span class="t" style="left:1440px;top:947px;color:#fff;">alice-Apose_arm|Caramell Dansen_export_bone</span>
<div style="left:1432px;top:1086px;width:38px;height:38px;background:#23354f;"></div>
<span class="t" style="left:1478px;top:1092px;color:#fff;">Play</span>
<div style="left:1432px;top:1132px;width:546px;height:38px;background:#23354f;"></div>
<div style="left:1662px;top:1136px;width:24px;height:30px;background:#3d85e0;"></div>
<div class="clip" style="left:1432px;top:1132px;width:546px;height:38px;"><span class="t" style="left:231.0px;top:6px">80.903</span></div>
<span class="t" style="left:1986px;top:1138px;color:#fff;">Time</span>
<div style="left:1432px;top:1178px;width:100px;height:38px;background:#2d4e76;"></div>
<span class="t" style="left:1440px;top:1184px;color:#fff;">Remove</span>
<svg style="left:0;top:0" width="2052" height="1600"><path d="M1418 1431 L1641 1400" stroke="#3a1c1c" stroke-width="2" fill="none"/></svg>
<div style="left:2050px;top:0;width:2px;height:1600px;background:#8a8a8a;"></div>
</div></body></html>
